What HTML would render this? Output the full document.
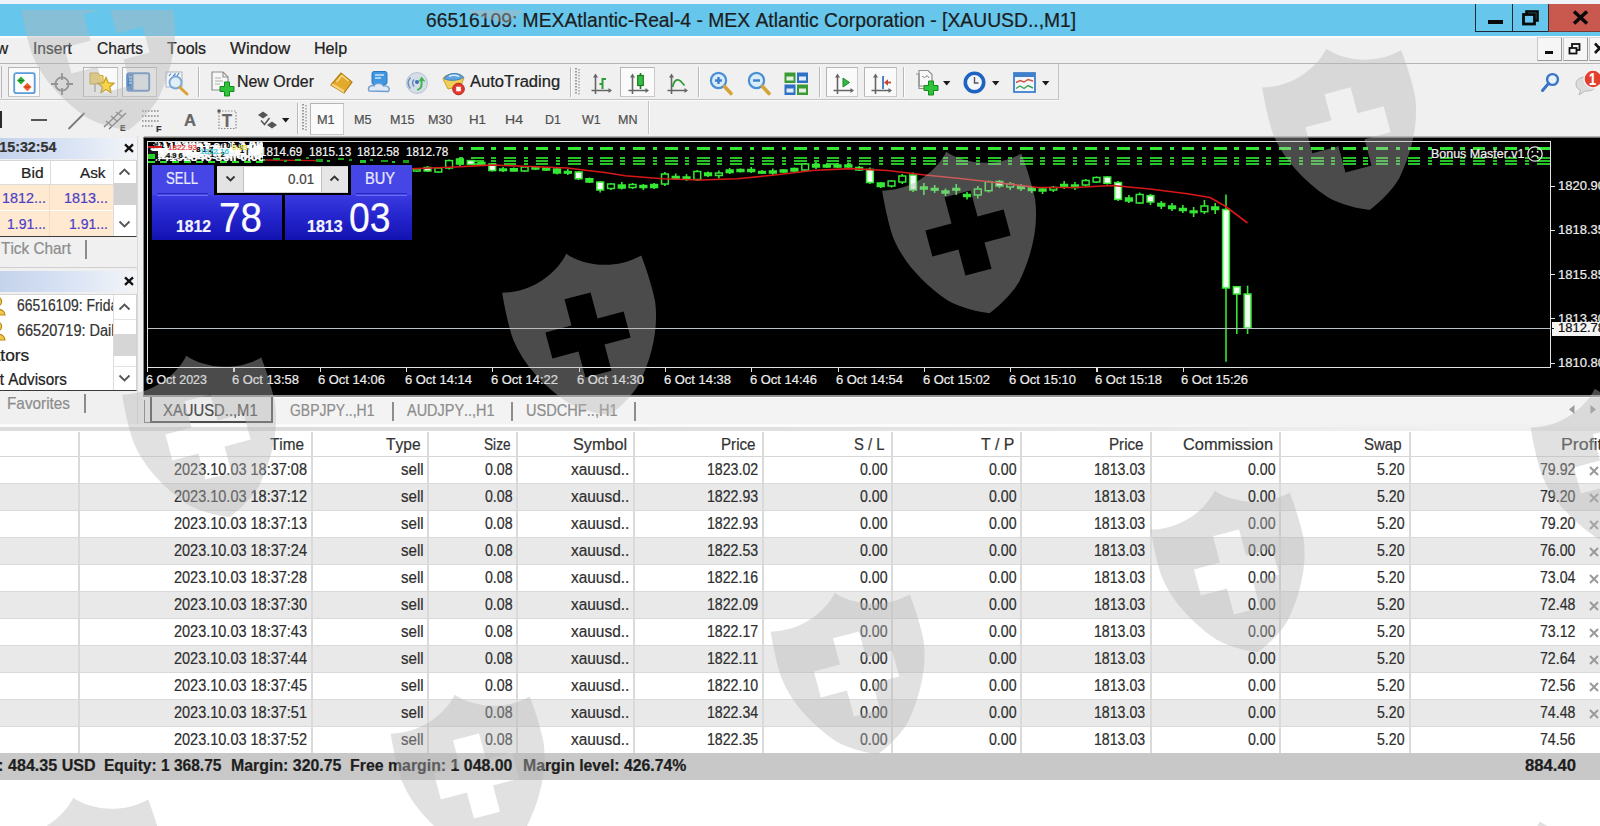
<!DOCTYPE html>
<html lang="en"><head><meta charset="utf-8"><title>66516109: MEXAtlantic-Real-4 - MEX Atlantic Corporation - [XAUUSD..,M1]</title><style>
html,body{margin:0;padding:0;}
body{width:1600px;height:826px;overflow:hidden;background:#fff;position:relative;
 font-family:"Liberation Sans",sans-serif;}
#root{position:absolute;left:0;top:0;width:1600px;height:826px;overflow:hidden;background:#fff;}
#inner{position:absolute;left:-8px;top:-8px;width:1616px;height:842px;background:#fff;}
#page{position:absolute;left:8px;top:8px;width:1600px;height:826px;}
#root div{position:absolute;box-sizing:border-box;}
#root svg{position:absolute;overflow:visible;}
.t{position:absolute;white-space:pre;font-kerning:none;font-variant-ligatures:none;transform-origin:0 50%;display:block;-webkit-text-stroke:0.22px currentColor;}
</style></head><body><div id="root"><div id="inner"><div id="page">
<div style="left:-12px;top:-12px;width:1624px;height:17px;background:#eef3f9;"></div>
<div style="left:-12px;top:4.4px;width:1624px;height:31.6px;background:#66c6ec;"></div>
<span class="t" style="left:426.00px;top:8.00px;font-size:19.5px;line-height:25px;color:#1c1c1c;transform:scale(0.9900,1.000);">66516109: MEXAtlantic-Real-4 - MEX Atlantic Corporation - [XAUUSD..,M1]</span>
<div style="left:1475px;top:4px;width:73px;height:28px;background:transparent;border-left:1px solid #1d2a33;border-bottom:1px solid #1d2a33;"></div>
<div style="left:1512px;top:4px;width:1px;height:28px;background:#1d2a33;"></div>
<div style="left:1548px;top:4px;width:64px;height:28px;background:#c9584f;border-left:1px solid #3a2a28;border-bottom:1px solid #7d3a35;"></div>
<div style="left:1488px;top:20px;width:14.5px;height:3.8px;background:#0a0a0a;"></div>
<svg style="left:1521px;top:8.5px;" width="20" height="18" viewBox="0 0 20 18"><rect x="5.5" y="2.5" width="11" height="9" fill="none" stroke="#0a0a0a" stroke-width="2.6"/><rect x="2.5" y="5.5" width="11" height="9.5" fill="#66c6ec" stroke="#0a0a0a" stroke-width="2.8"/></svg>
<svg style="left:1570.5px;top:9px;" width="20" height="18" viewBox="0 0 20 18"><path d="M3 2.5 L16 14.5 M16 2.5 L3 14.5" stroke="#0a0a0a" stroke-width="3.6" fill="none"/></svg>
<div style="left:-12px;top:36px;width:1624px;height:27px;background:#f0f0f0;"></div>
<div style="left:-12px;top:36px;width:1624px;height:1.5px;background:#f9fbfd;"></div>
<div style="left:-12px;top:62.5px;width:1624px;height:1.2px;background:#b4b4b4;"></div>
<span class="t" style="left:-27.00px;top:37.60px;font-size:16.6px;line-height:22px;color:#222;transform:scale(0.9763,1.000);">View</span>
<span class="t" style="left:33.00px;top:37.60px;font-size:16.6px;line-height:22px;color:#222;transform:scale(0.9379,1.000);">Insert</span>
<span class="t" style="left:97.00px;top:37.60px;font-size:16.6px;line-height:22px;color:#222;transform:scale(0.9409,1.000);">Charts</span>
<span class="t" style="left:167.00px;top:37.60px;font-size:16.6px;line-height:22px;color:#222;transform:scale(0.9635,1.000);">Tools</span>
<span class="t" style="left:230.00px;top:37.60px;font-size:16.6px;line-height:22px;color:#222;transform:scale(1.0182,1.000);">Window</span>
<span class="t" style="left:314.00px;top:37.60px;font-size:16.6px;line-height:22px;color:#222;transform:scale(0.9697,1.000);">Help</span>
<div style="left:1537px;top:37px;width:25px;height:24px;background:#f6f6f6;border:1px solid #9a9a9a;border-top-color:#d8d8d8;border-left-color:#c8c8c8;"></div>
<div style="left:1563px;top:37px;width:25px;height:24px;background:#f6f6f6;border:1px solid #9a9a9a;border-top-color:#d8d8d8;border-left-color:#c8c8c8;"></div>
<div style="left:1589px;top:37px;width:25px;height:24px;background:#f6f6f6;border:1px solid #9a9a9a;border-top-color:#d8d8d8;border-left-color:#c8c8c8;"></div>
<div style="left:1545px;top:51px;width:8px;height:2.5px;background:#111;"></div>
<svg style="left:1566px;top:40px;" width="20" height="18" viewBox="0 0 20 18"><rect x="6" y="4" width="7.5" height="6" fill="none" stroke="#111" stroke-width="1.8"/><rect x="3.5" y="8" width="7" height="5.5" fill="#f6f6f6" stroke="#111" stroke-width="1.8"/></svg>
<svg style="left:1592px;top:40px;" width="12" height="18" viewBox="0 0 12 18"><path d="M3 3.5 L12 13 M12 3.5 L3 13" stroke="#111" stroke-width="2.6" fill="none"/></svg>
<div style="left:-12px;top:63.8px;width:1624px;height:72.2px;background:#f0f0f0;"></div>
<div style="left:-12px;top:99px;width:1071px;height:1px;background:#c4c4c4;"></div>
<div style="left:-12px;top:100px;width:1071px;height:1px;background:#fafafa;"></div>
<div style="left:1058px;top:64px;width:1px;height:36px;background:#c4c4c4;"></div>
<div style="left:648px;top:101px;width:1px;height:33px;background:#c4c4c4;"></div>
<div style="left:649px;top:101px;width:1px;height:33px;background:#fbfbfb;"></div>
<div style="left:1px;top:66px;width:1px;height:32px;background:#b8b8b8;"></div>
<div style="left:8px;top:67px;width:32px;height:29.5px;background:#fafafa;border:1px solid #c9c9c9;border-top-color:#b5b5b5;border-left-color:#b5b5b5;"></div>
<svg style="left:13px;top:71.5px;" width="24" height="24" viewBox="0 0 24 24"><rect x="1.2" y="1.2" width="20.5" height="20" rx="2" fill="#fdfdfd" stroke="#5b9bd8" stroke-width="1.8"/><path d="M4 8.5 L8 4.5 L12 8.5 L8 12.5 Z" fill="#2fae3a"/><path d="M5.5 8.5 L10.5 8.5" stroke="#0d7a1c" stroke-width="1.2"/><path d="M10 15 L14.3 10.7 L18.6 15 L14.3 19.3 Z" fill="#f0642e"/><path d="M11.8 15 L16.8 15" stroke="#b83a10" stroke-width="1.2"/></svg>
<svg style="left:50px;top:72px;" width="24" height="24" viewBox="0 0 24 24"><circle cx="12" cy="12" r="6.6" fill="none" stroke="#7d7d7d" stroke-width="1.8"/><path d="M12 1 V8 M12 16 V23 M1 12 H8 M16 12 H23" stroke="#7d7d7d" stroke-width="1.8"/></svg>
<div style="left:83px;top:67px;width:35px;height:29.5px;background:#fafafa;border:1px solid #c9c9c9;border-top-color:#b5b5b5;border-left-color:#b5b5b5;"></div>
<svg style="left:88px;top:69px;" width="28" height="28" viewBox="0 0 28 28"><path d="M2 4 H10 L12 6.5 H15 V15 H2 Z" fill="#f3d36a" stroke="#c9a437" stroke-width="1"/><path d="M7 15 V23" stroke="#9a9a9a" stroke-width="1.3"/><path d="M18 8.5 L20.3 13.8 L26 14.3 L21.7 18 L23 23.6 L18 20.6 L13 23.6 L14.3 18 L10 14.3 L15.7 13.8 Z" fill="#f7d54a" stroke="#c49a1c" stroke-width="1.2"/></svg>
<div style="left:122px;top:67px;width:35px;height:29.5px;background:#fafafa;border:1px solid #c9c9c9;border-top-color:#b5b5b5;border-left-color:#b5b5b5;"></div>
<svg style="left:126px;top:72px;" width="26" height="22" viewBox="0 0 26 22"><rect x="1.2" y="1.2" width="22" height="17.5" rx="1.5" fill="#e8ecf2" stroke="#5f8fc8" stroke-width="1.9"/><rect x="2" y="2" width="5.5" height="16" fill="#4f86c6"/><path d="M3 5 H6 M3 8 H6 M3 11 H6" stroke="#dfe9f5" stroke-width="1"/></svg>
<svg style="left:164px;top:70px;" width="28" height="28" viewBox="0 0 28 28"><rect x="2" y="2" width="16" height="15" fill="#f4f6f9" stroke="#aab4c2" stroke-width="1"/><path d="M5 6 L7 3.5 M9 6.5 L11.5 3.5 M13 6 L15 3" stroke="#4f86c6" stroke-width="1.2"/><circle cx="11.5" cy="12.5" r="6" fill="#dcecf8" fill-opacity="0.85" stroke="#7aa7d6" stroke-width="1.8"/><path d="M16 17.5 L23 24" stroke="#d9a233" stroke-width="3" stroke-linecap="round"/></svg>
<div style="left:198px;top:67px;width:1px;height:30px;background:#b8b8b8;"></div>
<div style="left:199px;top:67px;width:1px;height:30px;background:#fdfdfd;"></div>
<svg style="left:210px;top:70px;" width="28" height="28" viewBox="0 0 28 28"><path d="M2 2 H13 L18 7 V20 H2 Z" fill="#f7f7f7" stroke="#8f8f8f" stroke-width="1.2"/><path d="M13 2 V7 H18" fill="none" stroke="#8f8f8f" stroke-width="1.1"/><path d="M5 8 H11 M5 11 H13 M5 14 H10" stroke="#b0b0b0" stroke-width="1"/><path d="M14.5 12 H19.5 V16.5 H24 V21.5 H19.5 V26 H14.5 V21.5 H10 V16.5 H14.5 Z" fill="#2fc23a" stroke="#15891f" stroke-width="1"/></svg>
<span class="t" style="left:237.00px;top:70.90px;font-size:16px;line-height:21px;color:#222;transform:scale(0.9953,1.000);">New Order</span>
<svg style="left:328px;top:70px;" width="28" height="26" viewBox="0 0 28 26"><path d="M3 15 L13 3 L24 12 L16 23 Z" fill="#e3a92a" stroke="#b57d12" stroke-width="1.2"/><path d="M3 15 L16 23 L16 20 L5 13.5 Z" fill="#f4d27a"/><path d="M8.5 12 L14 5.5 L20.5 11" fill="none" stroke="#f6dc93" stroke-width="1.4"/></svg>
<svg style="left:366px;top:70px;" width="26" height="26" viewBox="0 0 26 26"><rect x="6" y="1.5" width="15" height="13" rx="2" fill="#3f97e2" stroke="#2a78c2" stroke-width="1"/><path d="M9 5 H18 M9 8 H15" stroke="#cfe6fa" stroke-width="1.3"/><path d="M3 21 C1 17 5 14.5 8 16 C9 12.5 16 12.5 17.5 16 C22 15 24.5 18.5 22.5 21.5 Z" fill="#dfe9f3" stroke="#6f9fd0" stroke-width="1.3"/></svg>
<svg style="left:403px;top:70px;" width="28" height="26" viewBox="0 0 28 26"><circle cx="14" cy="13" r="10.5" fill="#d4dde8" stroke="#b7c3d2" stroke-width="1"/><path d="M7.5 7.5 C4.5 11 4.5 15 7.5 18.5 M11 9.5 C9 12 9 14 11 16.5" fill="none" stroke="#6d8fbf" stroke-width="1.5"/><circle cx="14" cy="12" r="2" fill="#3c6fb6"/><path d="M14 20.5 C18.5 20.5 20 17 19.5 11 L22.5 11.5 L18.5 6.5 L15.5 11.5 L17.5 11.3 C18 15.5 17 18.5 14 19 Z" fill="#3eb54a"/></svg>
<svg style="left:440px;top:69px;" width="28" height="28" viewBox="0 0 28 28"><path d="M3 10 C3 5 20 2.5 24 8.5 L21 17 L8 20 Z" fill="#f1cf54" stroke="#c7a12e" stroke-width="1"/><path d="M4 9.5 C8 3 20 3 23.5 8.5 C19 11.5 9 12.5 4 9.5 Z" fill="#5ea4de" stroke="#3a7fc0" stroke-width="1"/><path d="M9 7.5 C12 6 16 6 19 7.5" stroke="#d7ebfa" stroke-width="1.4" fill="none"/><circle cx="18.5" cy="20" r="5.8" fill="#e23a2c" stroke="#b3221a" stroke-width="1"/><rect x="16.2" y="17.7" width="4.6" height="4.6" fill="#fff"/></svg>
<span class="t" style="left:470.00px;top:70.90px;font-size:16px;line-height:21px;color:#222;transform:scale(1.0341,1.000);">AutoTrading</span>
<div style="left:570px;top:67px;width:1px;height:30px;background:#b8b8b8;"></div>
<div style="left:571px;top:67px;width:1px;height:30px;background:#fdfdfd;"></div>
<svg style="left:575px;top:68px;" width="6" height="29" viewBox="0 0 6 29"><rect x="0" y="0" width="2" height="1.5" fill="#9a9a9a"/><rect x="3" y="1" width="2" height="1.5" fill="#b5b5b5"/><rect x="0" y="3" width="2" height="1.5" fill="#9a9a9a"/><rect x="3" y="4" width="2" height="1.5" fill="#b5b5b5"/><rect x="0" y="6" width="2" height="1.5" fill="#9a9a9a"/><rect x="3" y="7" width="2" height="1.5" fill="#b5b5b5"/><rect x="0" y="9" width="2" height="1.5" fill="#9a9a9a"/><rect x="3" y="10" width="2" height="1.5" fill="#b5b5b5"/><rect x="0" y="12" width="2" height="1.5" fill="#9a9a9a"/><rect x="3" y="13" width="2" height="1.5" fill="#b5b5b5"/><rect x="0" y="15" width="2" height="1.5" fill="#9a9a9a"/><rect x="3" y="16" width="2" height="1.5" fill="#b5b5b5"/><rect x="0" y="18" width="2" height="1.5" fill="#9a9a9a"/><rect x="3" y="19" width="2" height="1.5" fill="#b5b5b5"/><rect x="0" y="21" width="2" height="1.5" fill="#9a9a9a"/><rect x="3" y="22" width="2" height="1.5" fill="#b5b5b5"/><rect x="0" y="24" width="2" height="1.5" fill="#9a9a9a"/><rect x="3" y="25" width="2" height="1.5" fill="#b5b5b5"/></svg>
<svg style="left:588px;top:70px;" width="26" height="26" viewBox="0 0 26 26"><path d="M7.5 6 V24 M3.5 20.5 H22" stroke="#666" stroke-width="1.6" fill="none"/><path d="M7.5 3.5 L5 7.5 H10 Z M24 20.5 L20.5 18 V23 Z" fill="#666"/><path d="M14.5 19 V9 H18 M14.5 14 H11.5" stroke="#2f9a3a" stroke-width="2" fill="none"/></svg>
<div style="left:620px;top:67px;width:35px;height:29.5px;background:#fafafa;border:1px solid #c9c9c9;border-top-color:#b5b5b5;border-left-color:#b5b5b5;"></div>
<svg style="left:625px;top:70px;" width="26" height="26" viewBox="0 0 26 26"><path d="M7.5 6 V24 M3.5 20.5 H22" stroke="#666" stroke-width="1.6" fill="none"/><path d="M7.5 3.5 L5 7.5 H10 Z M24 20.5 L20.5 18 V23 Z" fill="#666"/><path d="M15.5 3 V19" stroke="#1d7a27" stroke-width="1.6"/><rect x="12.7" y="5.5" width="5.6" height="10" fill="#35c043" stroke="#1d7a27" stroke-width="1.2"/></svg>
<svg style="left:664px;top:70px;" width="26" height="26" viewBox="0 0 26 26"><path d="M7.5 6 V24 M3.5 20.5 H22" stroke="#666" stroke-width="1.6" fill="none"/><path d="M7.5 3.5 L5 7.5 H10 Z M24 20.5 L20.5 18 V23 Z" fill="#666"/><path d="M8.5 17 C10.5 9 14 8.5 17 11.5 L20.5 15.5" stroke="#2f9a3a" stroke-width="1.8" fill="none"/></svg>
<div style="left:698px;top:67px;width:1px;height:30px;background:#b8b8b8;"></div>
<div style="left:699px;top:67px;width:1px;height:30px;background:#fdfdfd;"></div>
<svg style="left:708px;top:70px;" width="28" height="28" viewBox="0 0 28 28"><circle cx="10.5" cy="10.5" r="7.6" fill="#d9ecfa" stroke="#4a8fd4" stroke-width="2.2"/><path d="M7 10.5 H14" stroke="#3a7fc8" stroke-width="2.4"/><path d="M10.5 7 V14" stroke="#3a7fc8" stroke-width="2.4"/><path d="M16.5 16.5 L23 23.5" stroke="#d4a436" stroke-width="3.6" stroke-linecap="round"/></svg>
<svg style="left:746px;top:70px;" width="28" height="28" viewBox="0 0 28 28"><circle cx="10.5" cy="10.5" r="7.6" fill="#d9ecfa" stroke="#4a8fd4" stroke-width="2.2"/><path d="M7 10.5 H14" stroke="#3a7fc8" stroke-width="2.4"/><path d="M16.5 16.5 L23 23.5" stroke="#d4a436" stroke-width="3.6" stroke-linecap="round"/></svg>
<svg style="left:784px;top:71.5px;" width="26" height="24" viewBox="0 0 26 24"><rect x="0.5" y="0.5" width="11" height="10.5" fill="#3a9a36"/><rect x="13" y="0.5" width="11" height="10.5" fill="#2f6fc4"/><rect x="0.5" y="12.5" width="11" height="10.5" fill="#2f6fc4"/><rect x="13" y="12.5" width="11" height="10.5" fill="#3a9a36"/><rect x="2.5" y="4.5" width="7" height="4" fill="#e6f0e0"/><rect x="15" y="4.5" width="7" height="4" fill="#e2ecf8"/><rect x="2.5" y="16.5" width="7" height="4" fill="#e2ecf8"/><rect x="15" y="16.5" width="7" height="4" fill="#e6f0e0"/></svg>
<div style="left:819px;top:67px;width:1px;height:30px;background:#b8b8b8;"></div>
<div style="left:820px;top:67px;width:1px;height:30px;background:#fdfdfd;"></div>
<div style="left:826px;top:67px;width:32px;height:29.5px;background:#fafafa;border:1px solid #c9c9c9;border-top-color:#b5b5b5;border-left-color:#b5b5b5;"></div>
<svg style="left:830px;top:70px;" width="26" height="26" viewBox="0 0 26 26"><path d="M7.5 6 V24 M3.5 20.5 H22" stroke="#666" stroke-width="1.6" fill="none"/><path d="M7.5 3.5 L5 7.5 H10 Z M24 20.5 L20.5 18 V23 Z" fill="#666"/><path d="M13 8 L19.5 12.5 L13 17 Z" fill="#35b843" stroke="#1d8a2a" stroke-width="1"/></svg>
<div style="left:864px;top:67px;width:33px;height:29.5px;background:#fafafa;border:1px solid #c9c9c9;border-top-color:#b5b5b5;border-left-color:#b5b5b5;"></div>
<svg style="left:868px;top:70px;" width="26" height="26" viewBox="0 0 26 26"><path d="M7.5 6 V24 M3.5 20.5 H22" stroke="#666" stroke-width="1.6" fill="none"/><path d="M7.5 3.5 L5 7.5 H10 Z M24 20.5 L20.5 18 V23 Z" fill="#666"/><path d="M15 6 V19" stroke="#3a78c4" stroke-width="1.8"/><path d="M23 12.5 H18" stroke="#c8442c" stroke-width="1.8"/><path d="M16 12.5 L20 9.3 V15.7 Z" fill="#c8442c"/></svg>
<div style="left:903px;top:67px;width:1px;height:30px;background:#b8b8b8;"></div>
<div style="left:904px;top:67px;width:1px;height:30px;background:#fdfdfd;"></div>
<svg style="left:914px;top:69px;" width="28" height="28" viewBox="0 0 28 28"><path d="M5 1.5 H14 L18 5.5 V17 H5 Z" fill="#f7f7f7" stroke="#8f8f8f" stroke-width="1.2"/><path d="M2 5 H5 V19.5 H13" fill="none" stroke="#8f8f8f" stroke-width="1.2"/><path d="M8 8 C9 6 10 10 11.5 8 S14 7 15 9" stroke="#777" stroke-width="1" fill="none"/><path d="M14.5 12 H19.5 V16.5 H24 V21.5 H19.5 V26 H14.5 V21.5 H10 V16.5 H14.5 Z" fill="#2fc23a" stroke="#15891f" stroke-width="1"/></svg>
<svg style="left:943px;top:81px;" width="8" height="5" viewBox="0 0 8 5"><path d="M0 0 H7.4 L3.7 4.4 Z" fill="#1a1a1a"/></svg>
<svg style="left:963px;top:71px;" width="24" height="24" viewBox="0 0 24 24"><circle cx="11.5" cy="11.5" r="9.2" fill="#f3f6fa" stroke="#1f63c0" stroke-width="3.6"/><path d="M11.5 6 V12 H15.5" stroke="#555" stroke-width="1.4" fill="none"/></svg>
<svg style="left:992px;top:81px;" width="8" height="5" viewBox="0 0 8 5"><path d="M0 0 H7.4 L3.7 4.4 Z" fill="#1a1a1a"/></svg>
<svg style="left:1013px;top:72px;" width="24" height="22" viewBox="0 0 24 22"><rect x="1" y="1" width="21" height="19" fill="#f2f6fb" stroke="#3f7fcc" stroke-width="1.8"/><rect x="1" y="1" width="21" height="4" fill="#3f7fcc"/><path d="M3 10.5 L7 8.5 L11 10 L15 7.5 L20 9" stroke="#d0533a" stroke-width="1.4" fill="none"/><path d="M3 16.5 L7 14 L11 16.5 L15 13.5 L20 16" stroke="#3aa04a" stroke-width="1.4" fill="none"/></svg>
<svg style="left:1042px;top:81px;" width="8" height="5" viewBox="0 0 8 5"><path d="M0 0 H7.4 L3.7 4.4 Z" fill="#1a1a1a"/></svg>
<svg style="left:1540px;top:71px;" width="22" height="24" viewBox="0 0 22 24"><circle cx="12.5" cy="8.5" r="5.4" fill="#e8f1fb" stroke="#3a74c8" stroke-width="2.4"/><path d="M8.5 12.5 L2.5 19.5" stroke="#3a74c8" stroke-width="3" stroke-linecap="round"/></svg>
<svg style="left:1572.7px;top:67.5px;" width="30" height="32" viewBox="0 0 30 32"><path d="M3 16 C3 11 8 9 13 9 C19 9 23 12 23 16.5 C23 21 18 23.5 12 23 L6 27 L7.5 22 C4.5 21 3 19 3 16 Z" fill="#dcdcdc" stroke="#b9b9b9" stroke-width="1"/><circle cx="20" cy="11" r="9" fill="#e2402f" stroke="#f6f0ee" stroke-width="1.4"/></svg>
<span class="t" style="left:1589.00px;top:68.50px;font-size:16px;line-height:21px;color:#fff;font-weight:bold;transform:scale(0.7883,1.000);">1</span>
<div style="left:-12px;top:111px;width:14px;height:17px;background:#2a2a2a;"></div>
<div style="left:31px;top:119px;width:16px;height:2px;background:#555;"></div>
<svg style="left:66px;top:110px;" width="22" height="22" viewBox="0 0 22 22"><path d="M2.5 19 L18.5 3" stroke="#7a7a7a" stroke-width="1.8"/></svg>
<svg style="left:102px;top:106px;" width="30" height="28" viewBox="0 0 30 28"><path d="M2 21 L20 4 M7 23 L24 7 M4 15 L10 20 M9 10 L16 16 M14 6 L21 11" stroke="#7a7a7a" stroke-width="1.3" fill="none"/></svg>
<span class="t" style="left:120.00px;top:122.00px;font-size:9.5px;line-height:12px;color:#444;font-weight:bold;transform:scale(0.8706,1.000);">E</span>
<svg style="left:141px;top:108px;" width="22" height="24" viewBox="0 0 22 24"><path d="M1 3 H19 M1 8 H19 M1 13 H19 M1 18 H13" stroke="#8a8a8a" stroke-width="1.4" stroke-dasharray="1.6 1.4"/></svg>
<span class="t" style="left:156.00px;top:122.50px;font-size:9.5px;line-height:12px;color:#333;font-weight:bold;transform:scale(0.9491,1.000);">F</span>
<span class="t" style="left:183.50px;top:109.50px;font-size:17px;line-height:22px;color:#666;font-weight:bold;transform:scale(0.9804,1.000);">A</span>
<svg style="left:216px;top:108px;" width="24" height="24" viewBox="0 0 24 24"><rect x="3" y="3" width="17" height="17.5" fill="none" stroke="#8a8a8a" stroke-width="1.2" stroke-dasharray="1.5 1.5"/><rect x="1.5" y="1.5" width="3" height="3" fill="#555"/></svg>
<span class="t" style="left:222.00px;top:109.50px;font-size:17.5px;line-height:23px;color:#666;font-weight:bold;transform:scale(0.9368,1.000);">T</span>
<svg style="left:256px;top:108px;" width="24" height="24" viewBox="0 0 24 24"><path d="M2 7 L7 3.5 L12 7 L7 10.5 Z" fill="#555"/><path d="M11 17 L16 13.5 L21 17 L16 20.5 Z" fill="#555"/><path d="M5 12.5 L8.5 16.5 L13.5 10" stroke="#555" stroke-width="1.5" fill="none"/></svg>
<svg style="left:282px;top:118px;" width="8" height="5" viewBox="0 0 8 5"><path d="M0 0 H7.4 L3.7 4.4 Z" fill="#1a1a1a"/></svg>
<div style="left:297px;top:103px;width:1px;height:31px;background:#b8b8b8;"></div>
<div style="left:298px;top:103px;width:1px;height:31px;background:#fdfdfd;"></div>
<svg style="left:302px;top:104px;" width="6" height="29" viewBox="0 0 6 29"><rect x="0" y="0" width="2" height="1.5" fill="#9a9a9a"/><rect x="3" y="1" width="2" height="1.5" fill="#b5b5b5"/><rect x="0" y="3" width="2" height="1.5" fill="#9a9a9a"/><rect x="3" y="4" width="2" height="1.5" fill="#b5b5b5"/><rect x="0" y="6" width="2" height="1.5" fill="#9a9a9a"/><rect x="3" y="7" width="2" height="1.5" fill="#b5b5b5"/><rect x="0" y="9" width="2" height="1.5" fill="#9a9a9a"/><rect x="3" y="10" width="2" height="1.5" fill="#b5b5b5"/><rect x="0" y="12" width="2" height="1.5" fill="#9a9a9a"/><rect x="3" y="13" width="2" height="1.5" fill="#b5b5b5"/><rect x="0" y="15" width="2" height="1.5" fill="#9a9a9a"/><rect x="3" y="16" width="2" height="1.5" fill="#b5b5b5"/><rect x="0" y="18" width="2" height="1.5" fill="#9a9a9a"/><rect x="3" y="19" width="2" height="1.5" fill="#b5b5b5"/><rect x="0" y="21" width="2" height="1.5" fill="#9a9a9a"/><rect x="3" y="22" width="2" height="1.5" fill="#b5b5b5"/><rect x="0" y="24" width="2" height="1.5" fill="#9a9a9a"/><rect x="3" y="25" width="2" height="1.5" fill="#b5b5b5"/></svg>
<div style="left:310px;top:103px;width:34px;height:32px;background:#fafafa;border:1px solid #c9c9c9;border-top-color:#b5b5b5;border-left-color:#b5b5b5;"></div>
<span class="t" style="left:317.00px;top:112.20px;font-size:12.6px;line-height:16px;color:#505050;transform:scale(1.0106,1.000);">M1</span>
<span class="t" style="left:354.40px;top:112.20px;font-size:12.6px;line-height:16px;color:#505050;transform:scale(1.0049,1.000);">M5</span>
<span class="t" style="left:389.60px;top:112.20px;font-size:12.6px;line-height:16px;color:#505050;transform:scale(0.9956,1.000);">M15</span>
<span class="t" style="left:427.50px;top:112.20px;font-size:12.6px;line-height:16px;color:#505050;transform:scale(0.9997,1.000);">M30</span>
<span class="t" style="left:468.70px;top:112.20px;font-size:12.6px;line-height:16px;color:#505050;transform:scale(1.0520,1.000);">H1</span>
<span class="t" style="left:505.00px;top:112.20px;font-size:12.6px;line-height:16px;color:#505050;transform:scale(1.1204,1.000);">H4</span>
<span class="t" style="left:544.70px;top:112.20px;font-size:12.6px;line-height:16px;color:#505050;transform:scale(0.9897,1.000);">D1</span>
<span class="t" style="left:582.00px;top:112.20px;font-size:12.6px;line-height:16px;color:#505050;transform:scale(0.9841,1.000);">W1</span>
<span class="t" style="left:617.50px;top:112.20px;font-size:12.6px;line-height:16px;color:#505050;transform:scale(0.9953,1.000);">MN</span>
<div style="left:-12px;top:136px;width:156px;height:290px;background:#f0f0f0;"></div>
<div style="left:0px;top:138px;width:137px;height:21px;background:linear-gradient(90deg,#c4d3ec 0%,#d6e1f3 45%,#e9eef7 80%,#f3f4f6 100%);"></div>
<span class="t" style="left:-101.95px;top:138.80px;font-size:13.8px;line-height:18px;color:#333;font-weight:bold;transform:scale(1.0326,1.000);">Market Watch: 15:32:54</span>
<svg style="left:123px;top:142px;" width="12" height="12" viewBox="0 0 12 12"><path d="M2 2.4 L10 9.8 M10 2.4 L2 9.8" stroke="#111" stroke-width="2.3" fill="none"/></svg>
<div style="left:-12px;top:160px;width:149px;height:77px;background:#fff;border-bottom:1px solid #3c3c3c;border-right:1px solid #d0d0d0;border-top:1px solid #d6d6d6;"></div>
<div style="left:-12px;top:184px;width:126px;height:1px;background:#dcdcdc;"></div>
<div style="left:50px;top:161px;width:1px;height:23px;background:#dcdcdc;"></div>
<div style="left:113px;top:161px;width:1px;height:75px;background:#dcdcdc;"></div>
<div style="left:-12px;top:185px;width:125px;height:25px;background:#ffe9d1;"></div>
<div style="left:-12px;top:211px;width:125px;height:25px;background:#ffe9d1;"></div>
<div style="left:49px;top:185px;width:1px;height:51px;background:#f5dcc0;"></div>
<span class="t" style="left:21.00px;top:162.50px;font-size:15.4px;line-height:20px;color:#222;transform:scale(1.0146,1.000);">Bid</span>
<span class="t" style="left:80.00px;top:162.50px;font-size:15.4px;line-height:20px;color:#222;transform:scale(0.9945,1.000);">Ask</span>
<span class="t" style="left:2.00px;top:188.00px;font-size:15.4px;line-height:20px;color:#4b40c6;transform:scale(0.9337,1.000);">1812...</span>
<span class="t" style="left:64.00px;top:188.00px;font-size:15.4px;line-height:20px;color:#4b40c6;transform:scale(0.9337,1.000);">1813...</span>
<span class="t" style="left:7.00px;top:214.00px;font-size:15.4px;line-height:20px;color:#4b40c6;transform:scale(0.9093,1.000);">1.91...</span>
<span class="t" style="left:69.00px;top:214.00px;font-size:15.4px;line-height:20px;color:#4b40c6;transform:scale(0.9093,1.000);">1.91...</span>
<svg style="left:118.0px;top:167px;" width="13" height="10" viewBox="0 0 13 10"><path d="M1.5 7.5 L6.5 2.5 L11.5 7.5" stroke="#555" stroke-width="1.8" fill="none"/></svg>
<div style="left:114px;top:183px;width:22px;height:22px;background:#d2d2d2;"></div>
<svg style="left:118.0px;top:219px;" width="13" height="10" viewBox="0 0 13 10"><path d="M1.5 2.5 L6.5 7.5 L11.5 2.5" stroke="#555" stroke-width="1.8" fill="none"/></svg>
<span class="t" style="left:1.00px;top:237.50px;font-size:16.4px;line-height:21px;color:#8c8c8c;transform:scale(0.9372,1.000);">Tick Chart</span>
<div style="left:85px;top:240px;width:1.5px;height:19px;background:#8c8c8c;"></div>
<div style="left:-12px;top:267px;width:149px;height:1px;background:#cfcfcf;"></div>
<div style="left:0px;top:271px;width:137px;height:21px;background:linear-gradient(90deg,#c4d3ec 0%,#d6e1f3 45%,#e9eef7 80%,#f3f4f6 100%);"></div>
<span class="t" style="left:-70.00px;top:271.50px;font-size:14.6px;line-height:19px;color:#333;font-weight:bold;transform:scale(0.9509,1.000);">Navigator</span>
<svg style="left:123px;top:275px;" width="12" height="12" viewBox="0 0 12 12"><path d="M2 2.4 L10 9.8 M10 2.4 L2 9.8" stroke="#111" stroke-width="2.3" fill="none"/></svg>
<div style="left:-12px;top:294px;width:149px;height:97px;background:#fff;border-bottom:1px solid #3c3c3c;border-right:1px solid #d0d0d0;border-top:1px solid #d6d6d6;"></div>
<div style="left:0;top:295px;width:113px;height:95px;overflow:hidden;">
<span class="t" style="left:17.00px;top:0.00px;font-size:15.8px;line-height:21px;color:#333;transform:scale(0.8792,1.000);">66516109: Friday</span>
<span class="t" style="left:17.00px;top:24.50px;font-size:15.8px;line-height:21px;color:#333;transform:scale(0.9167,1.000);">66520719: Daily</span>
<span class="t" style="left:-46.28px;top:50.00px;font-size:15.8px;line-height:21px;color:#222;transform:scale(1.0991,1.000);">Indicators</span>
<span class="t" style="left:-39.84px;top:74.00px;font-size:15.8px;line-height:21px;color:#222;transform:scale(0.9661,1.000);">Expert Advisors</span>
<svg style="left:-12px;top:1px;" width="18" height="20" viewBox="0 0 18 20"><circle cx="9" cy="5.5" r="4.6" fill="#f2c84a" stroke="#b98a1a" stroke-width="1.2"/><path d="M1 19 C1 11 17 11 17 19 Z" fill="#f2c84a" stroke="#b98a1a" stroke-width="1.2"/></svg>
<svg style="left:-12px;top:26px;" width="18" height="20" viewBox="0 0 18 20"><circle cx="9" cy="5.5" r="4.6" fill="#f2c84a" stroke="#b98a1a" stroke-width="1.2"/><path d="M1 19 C1 11 17 11 17 19 Z" fill="#f2c84a" stroke="#b98a1a" stroke-width="1.2"/></svg>
</div>
<div style="left:113px;top:295px;width:1px;height:95px;background:#dcdcdc;"></div>
<div style="left:114px;top:319px;width:22px;height:1px;background:#e2e2e2;"></div>
<div style="left:114px;top:366px;width:22px;height:1px;background:#e2e2e2;"></div>
<svg style="left:118.0px;top:302px;" width="13" height="10" viewBox="0 0 13 10"><path d="M1.5 7.5 L6.5 2.5 L11.5 7.5" stroke="#555" stroke-width="1.8" fill="none"/></svg>
<div style="left:114px;top:334px;width:22px;height:22px;background:#d6d6d6;"></div>
<svg style="left:118.0px;top:373px;" width="13" height="10" viewBox="0 0 13 10"><path d="M1.5 2.5 L6.5 7.5 L11.5 2.5" stroke="#555" stroke-width="1.8" fill="none"/></svg>
<span class="t" style="left:7.00px;top:392.50px;font-size:16.4px;line-height:21px;color:#8c8c8c;transform:scale(0.9347,1.000);">Favorites</span>
<div style="left:84px;top:394px;width:1.5px;height:19px;background:#8c8c8c;"></div>
<div style="left:137px;top:136px;width:1px;height:288px;background:#dadada;"></div>
<div style="left:143.6px;top:135.6px;width:1457px;height:2.2px;background:linear-gradient(180deg,#d8d8d8,#4a4a4a);"></div>
<div style="left:143.6px;top:137.6px;width:1457px;height:257.2px;background:#000;"></div>
<div style="left:142.8px;top:137px;width:1px;height:258px;background:#8a8a8a;"></div>
<div style="left:147px;top:141px;width:1404px;height:1px;background:#e2e2e2;"></div>
<div style="left:147px;top:141px;width:1px;height:227px;background:#e2e2e2;"></div>
<div style="left:1550px;top:141px;width:1px;height:227px;background:#e2e2e2;"></div>
<div style="left:147px;top:367px;width:1404px;height:1px;background:#e2e2e2;"></div>
<div style="left:148px;top:142px;width:1402px;height:225px;overflow:hidden;">
<div style="left:310.95px;top:5.40px;width:4.40px;height:3.00px;background:#35e835;"></div>
<div style="left:310.95px;top:15.00px;width:4.40px;height:2.10px;background:#27c227;"></div>
<div style="left:310.95px;top:18.20px;width:4.40px;height:2.10px;background:#27c227;"></div>
<div style="left:310.95px;top:21.40px;width:4.40px;height:2.10px;background:#27c227;"></div>
<div style="left:323.25px;top:5.40px;width:12.50px;height:3.00px;background:#35e835;"></div>
<div style="left:323.25px;top:15.00px;width:12.50px;height:2.10px;background:#27c227;"></div>
<div style="left:323.25px;top:18.20px;width:12.50px;height:2.10px;background:#27c227;"></div>
<div style="left:323.25px;top:21.40px;width:12.50px;height:2.10px;background:#27c227;"></div>
<div style="left:343.25px;top:5.40px;width:4.40px;height:3.00px;background:#35e835;"></div>
<div style="left:343.25px;top:15.00px;width:4.40px;height:2.10px;background:#27c227;"></div>
<div style="left:343.25px;top:18.20px;width:4.40px;height:2.10px;background:#27c227;"></div>
<div style="left:343.25px;top:21.40px;width:4.40px;height:2.10px;background:#27c227;"></div>
<div style="left:355.55px;top:5.40px;width:12.50px;height:3.00px;background:#35e835;"></div>
<div style="left:355.55px;top:15.00px;width:12.50px;height:2.10px;background:#27c227;"></div>
<div style="left:355.55px;top:18.20px;width:12.50px;height:2.10px;background:#27c227;"></div>
<div style="left:355.55px;top:21.40px;width:12.50px;height:2.10px;background:#27c227;"></div>
<div style="left:375.55px;top:5.40px;width:4.40px;height:3.00px;background:#35e835;"></div>
<div style="left:375.55px;top:15.00px;width:4.40px;height:2.10px;background:#27c227;"></div>
<div style="left:375.55px;top:18.20px;width:4.40px;height:2.10px;background:#27c227;"></div>
<div style="left:375.55px;top:21.40px;width:4.40px;height:2.10px;background:#27c227;"></div>
<div style="left:387.85px;top:5.40px;width:12.50px;height:3.00px;background:#35e835;"></div>
<div style="left:387.85px;top:15.00px;width:12.50px;height:2.10px;background:#27c227;"></div>
<div style="left:387.85px;top:18.20px;width:12.50px;height:2.10px;background:#27c227;"></div>
<div style="left:387.85px;top:21.40px;width:12.50px;height:2.10px;background:#27c227;"></div>
<div style="left:407.85px;top:5.40px;width:4.40px;height:3.00px;background:#35e835;"></div>
<div style="left:407.85px;top:15.00px;width:4.40px;height:2.10px;background:#27c227;"></div>
<div style="left:407.85px;top:18.20px;width:4.40px;height:2.10px;background:#27c227;"></div>
<div style="left:407.85px;top:21.40px;width:4.40px;height:2.10px;background:#27c227;"></div>
<div style="left:420.15px;top:5.40px;width:12.50px;height:3.00px;background:#35e835;"></div>
<div style="left:420.15px;top:15.00px;width:12.50px;height:2.10px;background:#27c227;"></div>
<div style="left:420.15px;top:18.20px;width:12.50px;height:2.10px;background:#27c227;"></div>
<div style="left:420.15px;top:21.40px;width:12.50px;height:2.10px;background:#27c227;"></div>
<div style="left:440.15px;top:5.40px;width:4.40px;height:3.00px;background:#35e835;"></div>
<div style="left:440.15px;top:15.00px;width:4.40px;height:2.10px;background:#27c227;"></div>
<div style="left:440.15px;top:18.20px;width:4.40px;height:2.10px;background:#27c227;"></div>
<div style="left:440.15px;top:21.40px;width:4.40px;height:2.10px;background:#27c227;"></div>
<div style="left:452.45px;top:5.40px;width:12.50px;height:3.00px;background:#35e835;"></div>
<div style="left:452.45px;top:15.00px;width:12.50px;height:2.10px;background:#27c227;"></div>
<div style="left:452.45px;top:18.20px;width:12.50px;height:2.10px;background:#27c227;"></div>
<div style="left:452.45px;top:21.40px;width:12.50px;height:2.10px;background:#27c227;"></div>
<div style="left:472.45px;top:5.40px;width:4.40px;height:3.00px;background:#35e835;"></div>
<div style="left:472.45px;top:15.00px;width:4.40px;height:2.10px;background:#27c227;"></div>
<div style="left:472.45px;top:18.20px;width:4.40px;height:2.10px;background:#27c227;"></div>
<div style="left:472.45px;top:21.40px;width:4.40px;height:2.10px;background:#27c227;"></div>
<div style="left:484.75px;top:5.40px;width:12.50px;height:3.00px;background:#35e835;"></div>
<div style="left:484.75px;top:15.00px;width:12.50px;height:2.10px;background:#27c227;"></div>
<div style="left:484.75px;top:18.20px;width:12.50px;height:2.10px;background:#27c227;"></div>
<div style="left:484.75px;top:21.40px;width:12.50px;height:2.10px;background:#27c227;"></div>
<div style="left:504.75px;top:5.40px;width:4.40px;height:3.00px;background:#35e835;"></div>
<div style="left:504.75px;top:15.00px;width:4.40px;height:2.10px;background:#27c227;"></div>
<div style="left:504.75px;top:18.20px;width:4.40px;height:2.10px;background:#27c227;"></div>
<div style="left:504.75px;top:21.40px;width:4.40px;height:2.10px;background:#27c227;"></div>
<div style="left:517.05px;top:5.40px;width:12.50px;height:3.00px;background:#35e835;"></div>
<div style="left:517.05px;top:15.00px;width:12.50px;height:2.10px;background:#27c227;"></div>
<div style="left:517.05px;top:18.20px;width:12.50px;height:2.10px;background:#27c227;"></div>
<div style="left:517.05px;top:21.40px;width:12.50px;height:2.10px;background:#27c227;"></div>
<div style="left:537.05px;top:5.40px;width:4.40px;height:3.00px;background:#35e835;"></div>
<div style="left:537.05px;top:15.00px;width:4.40px;height:2.10px;background:#27c227;"></div>
<div style="left:537.05px;top:18.20px;width:4.40px;height:2.10px;background:#27c227;"></div>
<div style="left:537.05px;top:21.40px;width:4.40px;height:2.10px;background:#27c227;"></div>
<div style="left:549.35px;top:5.40px;width:12.50px;height:3.00px;background:#35e835;"></div>
<div style="left:549.35px;top:15.00px;width:12.50px;height:2.10px;background:#27c227;"></div>
<div style="left:549.35px;top:18.20px;width:12.50px;height:2.10px;background:#27c227;"></div>
<div style="left:549.35px;top:21.40px;width:12.50px;height:2.10px;background:#27c227;"></div>
<div style="left:569.35px;top:5.40px;width:4.40px;height:3.00px;background:#35e835;"></div>
<div style="left:569.35px;top:15.00px;width:4.40px;height:2.10px;background:#27c227;"></div>
<div style="left:569.35px;top:18.20px;width:4.40px;height:2.10px;background:#27c227;"></div>
<div style="left:569.35px;top:21.40px;width:4.40px;height:2.10px;background:#27c227;"></div>
<div style="left:581.65px;top:5.40px;width:12.50px;height:3.00px;background:#35e835;"></div>
<div style="left:581.65px;top:15.00px;width:12.50px;height:2.10px;background:#27c227;"></div>
<div style="left:581.65px;top:18.20px;width:12.50px;height:2.10px;background:#27c227;"></div>
<div style="left:581.65px;top:21.40px;width:12.50px;height:2.10px;background:#27c227;"></div>
<div style="left:601.65px;top:5.40px;width:4.40px;height:3.00px;background:#35e835;"></div>
<div style="left:601.65px;top:15.00px;width:4.40px;height:2.10px;background:#27c227;"></div>
<div style="left:601.65px;top:18.20px;width:4.40px;height:2.10px;background:#27c227;"></div>
<div style="left:601.65px;top:21.40px;width:4.40px;height:2.10px;background:#27c227;"></div>
<div style="left:613.95px;top:5.40px;width:12.50px;height:3.00px;background:#35e835;"></div>
<div style="left:613.95px;top:15.00px;width:12.50px;height:2.10px;background:#27c227;"></div>
<div style="left:613.95px;top:18.20px;width:12.50px;height:2.10px;background:#27c227;"></div>
<div style="left:613.95px;top:21.40px;width:12.50px;height:2.10px;background:#27c227;"></div>
<div style="left:633.95px;top:5.40px;width:4.40px;height:3.00px;background:#35e835;"></div>
<div style="left:633.95px;top:15.00px;width:4.40px;height:2.10px;background:#27c227;"></div>
<div style="left:633.95px;top:18.20px;width:4.40px;height:2.10px;background:#27c227;"></div>
<div style="left:633.95px;top:21.40px;width:4.40px;height:2.10px;background:#27c227;"></div>
<div style="left:646.25px;top:5.40px;width:12.50px;height:3.00px;background:#35e835;"></div>
<div style="left:646.25px;top:15.00px;width:12.50px;height:2.10px;background:#27c227;"></div>
<div style="left:646.25px;top:18.20px;width:12.50px;height:2.10px;background:#27c227;"></div>
<div style="left:646.25px;top:21.40px;width:12.50px;height:2.10px;background:#27c227;"></div>
<div style="left:666.25px;top:5.40px;width:4.40px;height:3.00px;background:#35e835;"></div>
<div style="left:666.25px;top:15.00px;width:4.40px;height:2.10px;background:#27c227;"></div>
<div style="left:666.25px;top:18.20px;width:4.40px;height:2.10px;background:#27c227;"></div>
<div style="left:666.25px;top:21.40px;width:4.40px;height:2.10px;background:#27c227;"></div>
<div style="left:678.55px;top:5.40px;width:12.50px;height:3.00px;background:#35e835;"></div>
<div style="left:678.55px;top:15.00px;width:12.50px;height:2.10px;background:#27c227;"></div>
<div style="left:678.55px;top:18.20px;width:12.50px;height:2.10px;background:#27c227;"></div>
<div style="left:678.55px;top:21.40px;width:12.50px;height:2.10px;background:#27c227;"></div>
<div style="left:698.55px;top:5.40px;width:4.40px;height:3.00px;background:#35e835;"></div>
<div style="left:698.55px;top:15.00px;width:4.40px;height:2.10px;background:#27c227;"></div>
<div style="left:698.55px;top:18.20px;width:4.40px;height:2.10px;background:#27c227;"></div>
<div style="left:698.55px;top:21.40px;width:4.40px;height:2.10px;background:#27c227;"></div>
<div style="left:710.85px;top:5.40px;width:12.50px;height:3.00px;background:#35e835;"></div>
<div style="left:710.85px;top:15.00px;width:12.50px;height:2.10px;background:#27c227;"></div>
<div style="left:710.85px;top:18.20px;width:12.50px;height:2.10px;background:#27c227;"></div>
<div style="left:710.85px;top:21.40px;width:12.50px;height:2.10px;background:#27c227;"></div>
<div style="left:730.85px;top:5.40px;width:4.40px;height:3.00px;background:#35e835;"></div>
<div style="left:730.85px;top:15.00px;width:4.40px;height:2.10px;background:#27c227;"></div>
<div style="left:730.85px;top:18.20px;width:4.40px;height:2.10px;background:#27c227;"></div>
<div style="left:730.85px;top:21.40px;width:4.40px;height:2.10px;background:#27c227;"></div>
<div style="left:743.15px;top:5.40px;width:12.50px;height:3.00px;background:#35e835;"></div>
<div style="left:743.15px;top:15.00px;width:12.50px;height:2.10px;background:#27c227;"></div>
<div style="left:743.15px;top:18.20px;width:12.50px;height:2.10px;background:#27c227;"></div>
<div style="left:743.15px;top:21.40px;width:12.50px;height:2.10px;background:#27c227;"></div>
<div style="left:763.15px;top:5.40px;width:4.40px;height:3.00px;background:#35e835;"></div>
<div style="left:763.15px;top:15.00px;width:4.40px;height:2.10px;background:#27c227;"></div>
<div style="left:763.15px;top:18.20px;width:4.40px;height:2.10px;background:#27c227;"></div>
<div style="left:763.15px;top:21.40px;width:4.40px;height:2.10px;background:#27c227;"></div>
<div style="left:775.45px;top:5.40px;width:12.50px;height:3.00px;background:#35e835;"></div>
<div style="left:775.45px;top:15.00px;width:12.50px;height:2.10px;background:#27c227;"></div>
<div style="left:775.45px;top:18.20px;width:12.50px;height:2.10px;background:#27c227;"></div>
<div style="left:775.45px;top:21.40px;width:12.50px;height:2.10px;background:#27c227;"></div>
<div style="left:795.45px;top:5.40px;width:4.40px;height:3.00px;background:#35e835;"></div>
<div style="left:795.45px;top:15.00px;width:4.40px;height:2.10px;background:#27c227;"></div>
<div style="left:795.45px;top:18.20px;width:4.40px;height:2.10px;background:#27c227;"></div>
<div style="left:795.45px;top:21.40px;width:4.40px;height:2.10px;background:#27c227;"></div>
<div style="left:807.75px;top:5.40px;width:12.50px;height:3.00px;background:#35e835;"></div>
<div style="left:807.75px;top:15.00px;width:12.50px;height:2.10px;background:#27c227;"></div>
<div style="left:807.75px;top:18.20px;width:12.50px;height:2.10px;background:#27c227;"></div>
<div style="left:807.75px;top:21.40px;width:12.50px;height:2.10px;background:#27c227;"></div>
<div style="left:827.75px;top:5.40px;width:4.40px;height:3.00px;background:#35e835;"></div>
<div style="left:827.75px;top:15.00px;width:4.40px;height:2.10px;background:#27c227;"></div>
<div style="left:827.75px;top:18.20px;width:4.40px;height:2.10px;background:#27c227;"></div>
<div style="left:827.75px;top:21.40px;width:4.40px;height:2.10px;background:#27c227;"></div>
<div style="left:840.05px;top:5.40px;width:12.50px;height:3.00px;background:#35e835;"></div>
<div style="left:840.05px;top:15.00px;width:12.50px;height:2.10px;background:#27c227;"></div>
<div style="left:840.05px;top:18.20px;width:12.50px;height:2.10px;background:#27c227;"></div>
<div style="left:840.05px;top:21.40px;width:12.50px;height:2.10px;background:#27c227;"></div>
<div style="left:860.05px;top:5.40px;width:4.40px;height:3.00px;background:#35e835;"></div>
<div style="left:860.05px;top:15.00px;width:4.40px;height:2.10px;background:#27c227;"></div>
<div style="left:860.05px;top:18.20px;width:4.40px;height:2.10px;background:#27c227;"></div>
<div style="left:860.05px;top:21.40px;width:4.40px;height:2.10px;background:#27c227;"></div>
<div style="left:872.35px;top:5.40px;width:12.50px;height:3.00px;background:#35e835;"></div>
<div style="left:872.35px;top:15.00px;width:12.50px;height:2.10px;background:#27c227;"></div>
<div style="left:872.35px;top:18.20px;width:12.50px;height:2.10px;background:#27c227;"></div>
<div style="left:872.35px;top:21.40px;width:12.50px;height:2.10px;background:#27c227;"></div>
<div style="left:892.35px;top:5.40px;width:4.40px;height:3.00px;background:#35e835;"></div>
<div style="left:892.35px;top:15.00px;width:4.40px;height:2.10px;background:#27c227;"></div>
<div style="left:892.35px;top:18.20px;width:4.40px;height:2.10px;background:#27c227;"></div>
<div style="left:892.35px;top:21.40px;width:4.40px;height:2.10px;background:#27c227;"></div>
<div style="left:904.65px;top:5.40px;width:12.50px;height:3.00px;background:#35e835;"></div>
<div style="left:904.65px;top:15.00px;width:12.50px;height:2.10px;background:#27c227;"></div>
<div style="left:904.65px;top:18.20px;width:12.50px;height:2.10px;background:#27c227;"></div>
<div style="left:904.65px;top:21.40px;width:12.50px;height:2.10px;background:#27c227;"></div>
<div style="left:924.65px;top:5.40px;width:4.40px;height:3.00px;background:#35e835;"></div>
<div style="left:924.65px;top:15.00px;width:4.40px;height:2.10px;background:#27c227;"></div>
<div style="left:924.65px;top:18.20px;width:4.40px;height:2.10px;background:#27c227;"></div>
<div style="left:924.65px;top:21.40px;width:4.40px;height:2.10px;background:#27c227;"></div>
<div style="left:936.95px;top:5.40px;width:12.50px;height:3.00px;background:#35e835;"></div>
<div style="left:936.95px;top:15.00px;width:12.50px;height:2.10px;background:#27c227;"></div>
<div style="left:936.95px;top:18.20px;width:12.50px;height:2.10px;background:#27c227;"></div>
<div style="left:936.95px;top:21.40px;width:12.50px;height:2.10px;background:#27c227;"></div>
<div style="left:956.95px;top:5.40px;width:4.40px;height:3.00px;background:#35e835;"></div>
<div style="left:956.95px;top:15.00px;width:4.40px;height:2.10px;background:#27c227;"></div>
<div style="left:956.95px;top:18.20px;width:4.40px;height:2.10px;background:#27c227;"></div>
<div style="left:956.95px;top:21.40px;width:4.40px;height:2.10px;background:#27c227;"></div>
<div style="left:969.25px;top:5.40px;width:12.50px;height:3.00px;background:#35e835;"></div>
<div style="left:969.25px;top:15.00px;width:12.50px;height:2.10px;background:#27c227;"></div>
<div style="left:969.25px;top:18.20px;width:12.50px;height:2.10px;background:#27c227;"></div>
<div style="left:969.25px;top:21.40px;width:12.50px;height:2.10px;background:#27c227;"></div>
<div style="left:989.25px;top:5.40px;width:4.40px;height:3.00px;background:#35e835;"></div>
<div style="left:989.25px;top:15.00px;width:4.40px;height:2.10px;background:#27c227;"></div>
<div style="left:989.25px;top:18.20px;width:4.40px;height:2.10px;background:#27c227;"></div>
<div style="left:989.25px;top:21.40px;width:4.40px;height:2.10px;background:#27c227;"></div>
<div style="left:1001.55px;top:5.40px;width:12.50px;height:3.00px;background:#35e835;"></div>
<div style="left:1001.55px;top:15.00px;width:12.50px;height:2.10px;background:#27c227;"></div>
<div style="left:1001.55px;top:18.20px;width:12.50px;height:2.10px;background:#27c227;"></div>
<div style="left:1001.55px;top:21.40px;width:12.50px;height:2.10px;background:#27c227;"></div>
<div style="left:1021.55px;top:5.40px;width:4.40px;height:3.00px;background:#35e835;"></div>
<div style="left:1021.55px;top:15.00px;width:4.40px;height:2.10px;background:#27c227;"></div>
<div style="left:1021.55px;top:18.20px;width:4.40px;height:2.10px;background:#27c227;"></div>
<div style="left:1021.55px;top:21.40px;width:4.40px;height:2.10px;background:#27c227;"></div>
<div style="left:1033.85px;top:5.40px;width:12.50px;height:3.00px;background:#35e835;"></div>
<div style="left:1033.85px;top:15.00px;width:12.50px;height:2.10px;background:#27c227;"></div>
<div style="left:1033.85px;top:18.20px;width:12.50px;height:2.10px;background:#27c227;"></div>
<div style="left:1033.85px;top:21.40px;width:12.50px;height:2.10px;background:#27c227;"></div>
<div style="left:1053.85px;top:5.40px;width:4.40px;height:3.00px;background:#35e835;"></div>
<div style="left:1053.85px;top:15.00px;width:4.40px;height:2.10px;background:#27c227;"></div>
<div style="left:1053.85px;top:18.20px;width:4.40px;height:2.10px;background:#27c227;"></div>
<div style="left:1053.85px;top:21.40px;width:4.40px;height:2.10px;background:#27c227;"></div>
<div style="left:1066.15px;top:5.40px;width:12.50px;height:3.00px;background:#35e835;"></div>
<div style="left:1066.15px;top:15.00px;width:12.50px;height:2.10px;background:#27c227;"></div>
<div style="left:1066.15px;top:18.20px;width:12.50px;height:2.10px;background:#27c227;"></div>
<div style="left:1066.15px;top:21.40px;width:12.50px;height:2.10px;background:#27c227;"></div>
<div style="left:1086.15px;top:5.40px;width:4.40px;height:3.00px;background:#35e835;"></div>
<div style="left:1086.15px;top:15.00px;width:4.40px;height:2.10px;background:#27c227;"></div>
<div style="left:1086.15px;top:18.20px;width:4.40px;height:2.10px;background:#27c227;"></div>
<div style="left:1086.15px;top:21.40px;width:4.40px;height:2.10px;background:#27c227;"></div>
<div style="left:1098.45px;top:5.40px;width:12.50px;height:3.00px;background:#35e835;"></div>
<div style="left:1098.45px;top:15.00px;width:12.50px;height:2.10px;background:#27c227;"></div>
<div style="left:1098.45px;top:18.20px;width:12.50px;height:2.10px;background:#27c227;"></div>
<div style="left:1098.45px;top:21.40px;width:12.50px;height:2.10px;background:#27c227;"></div>
<div style="left:1118.45px;top:5.40px;width:4.40px;height:3.00px;background:#35e835;"></div>
<div style="left:1118.45px;top:15.00px;width:4.40px;height:2.10px;background:#27c227;"></div>
<div style="left:1118.45px;top:18.20px;width:4.40px;height:2.10px;background:#27c227;"></div>
<div style="left:1118.45px;top:21.40px;width:4.40px;height:2.10px;background:#27c227;"></div>
<div style="left:1130.75px;top:5.40px;width:12.50px;height:3.00px;background:#35e835;"></div>
<div style="left:1130.75px;top:15.00px;width:12.50px;height:2.10px;background:#27c227;"></div>
<div style="left:1130.75px;top:18.20px;width:12.50px;height:2.10px;background:#27c227;"></div>
<div style="left:1130.75px;top:21.40px;width:12.50px;height:2.10px;background:#27c227;"></div>
<div style="left:1150.75px;top:5.40px;width:4.40px;height:3.00px;background:#35e835;"></div>
<div style="left:1150.75px;top:15.00px;width:4.40px;height:2.10px;background:#27c227;"></div>
<div style="left:1150.75px;top:18.20px;width:4.40px;height:2.10px;background:#27c227;"></div>
<div style="left:1150.75px;top:21.40px;width:4.40px;height:2.10px;background:#27c227;"></div>
<div style="left:1163.05px;top:5.40px;width:12.50px;height:3.00px;background:#35e835;"></div>
<div style="left:1163.05px;top:15.00px;width:12.50px;height:2.10px;background:#27c227;"></div>
<div style="left:1163.05px;top:18.20px;width:12.50px;height:2.10px;background:#27c227;"></div>
<div style="left:1163.05px;top:21.40px;width:12.50px;height:2.10px;background:#27c227;"></div>
<div style="left:1183.05px;top:5.40px;width:4.40px;height:3.00px;background:#35e835;"></div>
<div style="left:1183.05px;top:15.00px;width:4.40px;height:2.10px;background:#27c227;"></div>
<div style="left:1183.05px;top:18.20px;width:4.40px;height:2.10px;background:#27c227;"></div>
<div style="left:1183.05px;top:21.40px;width:4.40px;height:2.10px;background:#27c227;"></div>
<div style="left:1195.35px;top:5.40px;width:12.50px;height:3.00px;background:#35e835;"></div>
<div style="left:1195.35px;top:15.00px;width:12.50px;height:2.10px;background:#27c227;"></div>
<div style="left:1195.35px;top:18.20px;width:12.50px;height:2.10px;background:#27c227;"></div>
<div style="left:1195.35px;top:21.40px;width:12.50px;height:2.10px;background:#27c227;"></div>
<div style="left:1215.35px;top:5.40px;width:4.40px;height:3.00px;background:#35e835;"></div>
<div style="left:1215.35px;top:15.00px;width:4.40px;height:2.10px;background:#27c227;"></div>
<div style="left:1215.35px;top:18.20px;width:4.40px;height:2.10px;background:#27c227;"></div>
<div style="left:1215.35px;top:21.40px;width:4.40px;height:2.10px;background:#27c227;"></div>
<div style="left:1227.65px;top:5.40px;width:12.50px;height:3.00px;background:#35e835;"></div>
<div style="left:1227.65px;top:15.00px;width:12.50px;height:2.10px;background:#27c227;"></div>
<div style="left:1227.65px;top:18.20px;width:12.50px;height:2.10px;background:#27c227;"></div>
<div style="left:1227.65px;top:21.40px;width:12.50px;height:2.10px;background:#27c227;"></div>
<div style="left:1247.65px;top:5.40px;width:4.40px;height:3.00px;background:#35e835;"></div>
<div style="left:1247.65px;top:15.00px;width:4.40px;height:2.10px;background:#27c227;"></div>
<div style="left:1247.65px;top:18.20px;width:4.40px;height:2.10px;background:#27c227;"></div>
<div style="left:1247.65px;top:21.40px;width:4.40px;height:2.10px;background:#27c227;"></div>
<div style="left:1259.95px;top:5.40px;width:12.50px;height:3.00px;background:#35e835;"></div>
<div style="left:1259.95px;top:15.00px;width:12.50px;height:2.10px;background:#27c227;"></div>
<div style="left:1259.95px;top:18.20px;width:12.50px;height:2.10px;background:#27c227;"></div>
<div style="left:1259.95px;top:21.40px;width:12.50px;height:2.10px;background:#27c227;"></div>
<div style="left:1279.95px;top:5.40px;width:4.40px;height:3.00px;background:#35e835;"></div>
<div style="left:1279.95px;top:15.00px;width:4.40px;height:2.10px;background:#27c227;"></div>
<div style="left:1279.95px;top:18.20px;width:4.40px;height:2.10px;background:#27c227;"></div>
<div style="left:1279.95px;top:21.40px;width:4.40px;height:2.10px;background:#27c227;"></div>
<div style="left:1292.25px;top:5.40px;width:12.50px;height:3.00px;background:#35e835;"></div>
<div style="left:1292.25px;top:15.00px;width:12.50px;height:2.10px;background:#27c227;"></div>
<div style="left:1292.25px;top:18.20px;width:12.50px;height:2.10px;background:#27c227;"></div>
<div style="left:1292.25px;top:21.40px;width:12.50px;height:2.10px;background:#27c227;"></div>
<div style="left:1312.25px;top:5.40px;width:4.40px;height:3.00px;background:#35e835;"></div>
<div style="left:1312.25px;top:15.00px;width:4.40px;height:2.10px;background:#27c227;"></div>
<div style="left:1312.25px;top:18.20px;width:4.40px;height:2.10px;background:#27c227;"></div>
<div style="left:1312.25px;top:21.40px;width:4.40px;height:2.10px;background:#27c227;"></div>
<div style="left:1324.55px;top:5.40px;width:12.50px;height:3.00px;background:#35e835;"></div>
<div style="left:1324.55px;top:15.00px;width:12.50px;height:2.10px;background:#27c227;"></div>
<div style="left:1324.55px;top:18.20px;width:12.50px;height:2.10px;background:#27c227;"></div>
<div style="left:1324.55px;top:21.40px;width:12.50px;height:2.10px;background:#27c227;"></div>
<div style="left:1344.55px;top:5.40px;width:4.40px;height:3.00px;background:#35e835;"></div>
<div style="left:1344.55px;top:15.00px;width:4.40px;height:2.10px;background:#27c227;"></div>
<div style="left:1344.55px;top:18.20px;width:4.40px;height:2.10px;background:#27c227;"></div>
<div style="left:1344.55px;top:21.40px;width:4.40px;height:2.10px;background:#27c227;"></div>
<div style="left:1356.85px;top:5.40px;width:12.50px;height:3.00px;background:#35e835;"></div>
<div style="left:1356.85px;top:15.00px;width:12.50px;height:2.10px;background:#27c227;"></div>
<div style="left:1356.85px;top:18.20px;width:12.50px;height:2.10px;background:#27c227;"></div>
<div style="left:1356.85px;top:21.40px;width:12.50px;height:2.10px;background:#27c227;"></div>
<div style="left:1376.85px;top:5.40px;width:4.40px;height:3.00px;background:#35e835;"></div>
<div style="left:1376.85px;top:15.00px;width:4.40px;height:2.10px;background:#27c227;"></div>
<div style="left:1376.85px;top:18.20px;width:4.40px;height:2.10px;background:#27c227;"></div>
<div style="left:1376.85px;top:21.40px;width:4.40px;height:2.10px;background:#27c227;"></div>
<div style="left:1389.15px;top:5.40px;width:12.50px;height:3.00px;background:#35e835;"></div>
<div style="left:1389.15px;top:15.00px;width:12.50px;height:2.10px;background:#27c227;"></div>
<div style="left:1389.15px;top:18.20px;width:12.50px;height:2.10px;background:#27c227;"></div>
<div style="left:1389.15px;top:21.40px;width:12.50px;height:2.10px;background:#27c227;"></div>
<div style="left:1409.15px;top:5.40px;width:4.40px;height:3.00px;background:#35e835;"></div>
<div style="left:1409.15px;top:15.00px;width:4.40px;height:2.10px;background:#27c227;"></div>
<div style="left:1409.15px;top:18.20px;width:4.40px;height:2.10px;background:#27c227;"></div>
<div style="left:1409.15px;top:21.40px;width:4.40px;height:2.10px;background:#27c227;"></div>
<svg style="left:0;top:0;" width="1402" height="225" viewBox="0 0 1402 225"><g><path d="M268.75 26.00 V30.00" stroke="#35e835" stroke-width="1.6"/><rect x="265.35" y="27.00" width="6.8" height="2.00" fill="#000" stroke="#35e835" stroke-width="1.5"/><path d="M279.54 24.00 V30.00" stroke="#35e835" stroke-width="1.6"/><rect x="276.14" y="25.50" width="6.8" height="3.50" fill="#f4fff4" stroke="#35e835" stroke-width="1.5"/><path d="M290.33 25.00 V31.00" stroke="#35e835" stroke-width="1.6"/><rect x="286.93" y="26.00" width="6.8" height="4.00" fill="#000" stroke="#35e835" stroke-width="1.5"/><path d="M301.12 17.50 V27.50" stroke="#35e835" stroke-width="1.6"/><rect x="297.72" y="18.60" width="6.8" height="7.40" fill="#000" stroke="#35e835" stroke-width="1.5"/><path d="M311.91 16.00 V24.00" stroke="#35e835" stroke-width="1.6"/><rect x="308.51" y="17.00" width="6.8" height="5.00" fill="#35e835" stroke="#35e835" stroke-width="1.5"/><path d="M322.70 18.00 V23.00" stroke="#35e835" stroke-width="1.6"/><rect x="319.30" y="18.60" width="6.8" height="3.80" fill="#f4fff4" stroke="#35e835" stroke-width="1.5"/><path d="M333.49 19.00 V24.00" stroke="#35e835" stroke-width="1.6"/><rect x="330.09" y="20.50" width="6.8" height="2.00" fill="#35e835" stroke="#35e835" stroke-width="1.5"/><path d="M344.28 21.00 V29.50" stroke="#35e835" stroke-width="1.6"/><rect x="340.88" y="22.00" width="6.8" height="6.60" fill="#f4fff4" stroke="#35e835" stroke-width="1.5"/><path d="M355.07 25.00 V30.00" stroke="#35e835" stroke-width="1.6"/><rect x="351.67" y="27.00" width="6.8" height="1.60" fill="#35e835" stroke="#35e835" stroke-width="1.5"/><path d="M365.86 25.50 V29.50" stroke="#35e835" stroke-width="1.6"/><rect x="362.46" y="26.75" width="6.8" height="2.25" fill="#35e835" stroke="#35e835" stroke-width="1.5"/><path d="M376.65 24.00 V30.00" stroke="#35e835" stroke-width="1.6"/><rect x="373.25" y="25.00" width="6.8" height="4.00" fill="#000" stroke="#35e835" stroke-width="1.5"/><path d="M387.44 24.50 V28.00" stroke="#35e835" stroke-width="1.6"/><rect x="384.04" y="25.00" width="6.8" height="2.00" fill="#35e835" stroke="#35e835" stroke-width="1.5"/><path d="M398.23 25.00 V29.00" stroke="#35e835" stroke-width="1.6"/><rect x="394.83" y="26.00" width="6.8" height="2.00" fill="#35e835" stroke="#35e835" stroke-width="1.5"/><path d="M409.02 26.00 V32.50" stroke="#35e835" stroke-width="1.6"/><rect x="405.62" y="27.00" width="6.8" height="4.00" fill="#35e835" stroke="#35e835" stroke-width="1.5"/><path d="M419.81 27.00 V33.00" stroke="#35e835" stroke-width="1.6"/><rect x="416.41" y="29.50" width="6.8" height="1.60" fill="#35e835" stroke="#35e835" stroke-width="1.5"/><path d="M430.60 29.00 V38.00" stroke="#35e835" stroke-width="1.6"/><rect x="427.20" y="30.00" width="6.8" height="6.75" fill="#f4fff4" stroke="#35e835" stroke-width="1.5"/><path d="M441.39 35.50 V41.00" stroke="#35e835" stroke-width="1.6"/><rect x="437.99" y="36.75" width="6.8" height="3.25" fill="#35e835" stroke="#35e835" stroke-width="1.5"/><path d="M452.18 39.00 V50.50" stroke="#35e835" stroke-width="1.6"/><rect x="448.78" y="40.00" width="6.8" height="8.00" fill="#f4fff4" stroke="#35e835" stroke-width="1.5"/><path d="M462.97 41.00 V48.00" stroke="#35e835" stroke-width="1.6"/><rect x="459.57" y="42.00" width="6.8" height="4.50" fill="#000" stroke="#35e835" stroke-width="1.5"/><path d="M473.76 40.00 V47.50" stroke="#35e835" stroke-width="1.6"/><rect x="470.36" y="43.00" width="6.8" height="3.00" fill="#35e835" stroke="#35e835" stroke-width="1.5"/><path d="M484.55 41.00 V47.00" stroke="#35e835" stroke-width="1.6"/><rect x="481.15" y="42.50" width="6.8" height="3.00" fill="#000" stroke="#35e835" stroke-width="1.5"/><path d="M495.34 42.00 V48.00" stroke="#35e835" stroke-width="1.6"/><rect x="491.94" y="43.50" width="6.8" height="2.00" fill="#35e835" stroke="#35e835" stroke-width="1.5"/><path d="M506.13 41.00 V47.00" stroke="#35e835" stroke-width="1.6"/><rect x="502.73" y="42.50" width="6.8" height="3.00" fill="#35e835" stroke="#35e835" stroke-width="1.5"/><path d="M516.92 30.00 V44.00" stroke="#35e835" stroke-width="1.6"/><rect x="513.52" y="32.00" width="6.8" height="10.00" fill="#000" stroke="#35e835" stroke-width="1.5"/><path d="M527.71 31.50 V38.00" stroke="#35e835" stroke-width="1.6"/><rect x="524.31" y="34.50" width="6.8" height="2.00" fill="#35e835" stroke="#35e835" stroke-width="1.5"/><path d="M538.50 32.00 V39.00" stroke="#35e835" stroke-width="1.6"/><rect x="535.10" y="35.00" width="6.8" height="2.00" fill="#35e835" stroke="#35e835" stroke-width="1.5"/><path d="M549.29 28.00 V39.00" stroke="#35e835" stroke-width="1.6"/><rect x="545.89" y="29.50" width="6.8" height="8.00" fill="#000" stroke="#35e835" stroke-width="1.5"/><path d="M560.08 29.50 V35.00" stroke="#35e835" stroke-width="1.6"/><rect x="556.68" y="31.00" width="6.8" height="2.50" fill="#35e835" stroke="#35e835" stroke-width="1.5"/><path d="M570.87 28.50 V36.50" stroke="#35e835" stroke-width="1.6"/><rect x="567.47" y="31.00" width="6.8" height="2.50" fill="#000" stroke="#35e835" stroke-width="1.5"/><path d="M581.66 26.00 V32.00" stroke="#35e835" stroke-width="1.6"/><rect x="578.26" y="28.00" width="6.8" height="2.50" fill="#35e835" stroke="#35e835" stroke-width="1.5"/><path d="M592.45 26.50 V30.50" stroke="#35e835" stroke-width="1.6"/><rect x="589.05" y="27.50" width="6.8" height="2.00" fill="#35e835" stroke="#35e835" stroke-width="1.5"/><path d="M603.24 25.00 V31.00" stroke="#35e835" stroke-width="1.6"/><rect x="599.84" y="27.50" width="6.8" height="2.00" fill="#35e835" stroke="#35e835" stroke-width="1.5"/><path d="M614.03 28.00 V32.00" stroke="#35e835" stroke-width="1.6"/><rect x="610.63" y="29.50" width="6.8" height="1.60" fill="#35e835" stroke="#35e835" stroke-width="1.5"/><path d="M624.82 26.50 V33.00" stroke="#35e835" stroke-width="1.6"/><rect x="621.42" y="29.00" width="6.8" height="2.00" fill="#35e835" stroke="#35e835" stroke-width="1.5"/><path d="M635.61 27.00 V31.00" stroke="#35e835" stroke-width="1.6"/><rect x="632.21" y="28.00" width="6.8" height="2.00" fill="#35e835" stroke="#35e835" stroke-width="1.5"/><path d="M646.40 25.50 V30.00" stroke="#35e835" stroke-width="1.6"/><rect x="643.00" y="26.50" width="6.8" height="2.50" fill="#35e835" stroke="#35e835" stroke-width="1.5"/><path d="M657.19 21.00 V30.00" stroke="#35e835" stroke-width="1.6"/><rect x="653.79" y="22.00" width="6.8" height="6.00" fill="#000" stroke="#35e835" stroke-width="1.5"/><path d="M667.98 20.00 V27.00" stroke="#35e835" stroke-width="1.6"/><rect x="664.58" y="22.50" width="6.8" height="2.50" fill="#35e835" stroke="#35e835" stroke-width="1.5"/><path d="M678.77 21.00 V26.00" stroke="#35e835" stroke-width="1.6"/><rect x="675.37" y="23.00" width="6.8" height="2.00" fill="#35e835" stroke="#35e835" stroke-width="1.5"/><path d="M689.56 21.50 V26.00" stroke="#35e835" stroke-width="1.6"/><rect x="686.16" y="23.00" width="6.8" height="2.00" fill="#35e835" stroke="#35e835" stroke-width="1.5"/><path d="M700.35 20.50 V26.00" stroke="#35e835" stroke-width="1.6"/><rect x="696.95" y="23.00" width="6.8" height="2.00" fill="#35e835" stroke="#35e835" stroke-width="1.5"/><path d="M711.14 24.00 V29.00" stroke="#35e835" stroke-width="1.6"/><rect x="707.74" y="25.50" width="6.8" height="2.50" fill="#35e835" stroke="#35e835" stroke-width="1.5"/><path d="M721.93 25.50 V42.00" stroke="#35e835" stroke-width="1.6"/><rect x="718.53" y="27.40" width="6.8" height="13.10" fill="#f4fff4" stroke="#35e835" stroke-width="1.5"/><path d="M732.72 40.00 V46.00" stroke="#35e835" stroke-width="1.6"/><rect x="729.32" y="41.00" width="6.8" height="3.50" fill="#35e835" stroke="#35e835" stroke-width="1.5"/><path d="M743.51 38.00 V45.50" stroke="#35e835" stroke-width="1.6"/><rect x="740.11" y="39.00" width="6.8" height="5.00" fill="#000" stroke="#35e835" stroke-width="1.5"/><path d="M754.30 32.00 V42.00" stroke="#35e835" stroke-width="1.6"/><rect x="750.90" y="34.00" width="6.8" height="6.00" fill="#000" stroke="#35e835" stroke-width="1.5"/><path d="M765.09 30.50 V50.00" stroke="#35e835" stroke-width="1.6"/><rect x="761.69" y="33.00" width="6.8" height="15.00" fill="#f4fff4" stroke="#35e835" stroke-width="1.5"/><path d="M775.88 41.00 V53.00" stroke="#35e835" stroke-width="1.6"/><rect x="772.48" y="45.00" width="6.8" height="2.00" fill="#35e835" stroke="#35e835" stroke-width="1.5"/><path d="M786.67 43.00 V51.00" stroke="#35e835" stroke-width="1.6"/><rect x="783.27" y="46.50" width="6.8" height="1.60" fill="#35e835" stroke="#35e835" stroke-width="1.5"/><path d="M797.46 46.50 V54.00" stroke="#35e835" stroke-width="1.6"/><rect x="794.06" y="49.00" width="6.8" height="2.00" fill="#35e835" stroke="#35e835" stroke-width="1.5"/><path d="M808.25 42.00 V53.00" stroke="#35e835" stroke-width="1.6"/><rect x="804.85" y="46.50" width="6.8" height="1.60" fill="#35e835" stroke="#35e835" stroke-width="1.5"/><path d="M819.04 50.00 V57.50" stroke="#35e835" stroke-width="1.6"/><rect x="815.64" y="52.50" width="6.8" height="2.00" fill="#35e835" stroke="#35e835" stroke-width="1.5"/><path d="M829.83 44.00 V56.50" stroke="#35e835" stroke-width="1.6"/><rect x="826.43" y="47.00" width="6.8" height="6.00" fill="#000" stroke="#35e835" stroke-width="1.5"/><path d="M840.62 38.50 V50.50" stroke="#35e835" stroke-width="1.6"/><rect x="837.22" y="39.70" width="6.8" height="9.00" fill="#000" stroke="#35e835" stroke-width="1.5"/><path d="M851.41 38.00 V46.00" stroke="#35e835" stroke-width="1.6"/><rect x="848.01" y="39.50" width="6.8" height="4.50" fill="#f4fff4" stroke="#35e835" stroke-width="1.5"/><path d="M862.20 40.00 V48.00" stroke="#35e835" stroke-width="1.6"/><rect x="858.80" y="42.00" width="6.8" height="3.00" fill="#000" stroke="#35e835" stroke-width="1.5"/><path d="M872.99 42.00 V49.00" stroke="#35e835" stroke-width="1.6"/><rect x="869.59" y="44.00" width="6.8" height="2.50" fill="#35e835" stroke="#35e835" stroke-width="1.5"/><path d="M883.78 44.00 V51.00" stroke="#35e835" stroke-width="1.6"/><rect x="880.38" y="46.00" width="6.8" height="2.50" fill="#35e835" stroke="#35e835" stroke-width="1.5"/><path d="M894.57 45.00 V52.00" stroke="#35e835" stroke-width="1.6"/><rect x="891.17" y="47.00" width="6.8" height="2.00" fill="#35e835" stroke="#35e835" stroke-width="1.5"/><path d="M905.36 44.00 V50.00" stroke="#35e835" stroke-width="1.6"/><rect x="901.96" y="45.50" width="6.8" height="2.50" fill="#000" stroke="#35e835" stroke-width="1.5"/><path d="M916.15 39.00 V47.00" stroke="#35e835" stroke-width="1.6"/><rect x="912.75" y="42.50" width="6.8" height="2.00" fill="#35e835" stroke="#35e835" stroke-width="1.5"/><path d="M926.94 40.00 V48.00" stroke="#35e835" stroke-width="1.6"/><rect x="923.54" y="43.00" width="6.8" height="2.50" fill="#35e835" stroke="#35e835" stroke-width="1.5"/><path d="M937.73 37.00 V44.50" stroke="#35e835" stroke-width="1.6"/><rect x="934.33" y="38.50" width="6.8" height="4.50" fill="#000" stroke="#35e835" stroke-width="1.5"/><path d="M948.52 34.50 V41.00" stroke="#35e835" stroke-width="1.6"/><rect x="945.12" y="35.50" width="6.8" height="4.50" fill="#000" stroke="#35e835" stroke-width="1.5"/><path d="M959.31 34.00 V42.50" stroke="#35e835" stroke-width="1.6"/><rect x="955.91" y="35.00" width="6.8" height="6.30" fill="#f4fff4" stroke="#35e835" stroke-width="1.5"/><path d="M970.10 39.00 V59.00" stroke="#35e835" stroke-width="1.6"/><rect x="966.70" y="40.50" width="6.8" height="16.90" fill="#f4fff4" stroke="#35e835" stroke-width="1.5"/><path d="M980.89 53.00 V61.00" stroke="#35e835" stroke-width="1.6"/><rect x="977.49" y="56.00" width="6.8" height="3.00" fill="#35e835" stroke="#35e835" stroke-width="1.5"/><path d="M991.68 50.50 V62.00" stroke="#35e835" stroke-width="1.6"/><rect x="988.28" y="52.50" width="6.8" height="8.50" fill="#000" stroke="#35e835" stroke-width="1.5"/><path d="M1002.47 52.00 V63.00" stroke="#35e835" stroke-width="1.6"/><rect x="999.07" y="53.60" width="6.8" height="6.40" fill="#f4fff4" stroke="#35e835" stroke-width="1.5"/><path d="M1013.26 59.00 V67.00" stroke="#35e835" stroke-width="1.6"/><rect x="1009.86" y="61.50" width="6.8" height="2.50" fill="#35e835" stroke="#35e835" stroke-width="1.5"/><path d="M1024.05 61.00 V69.00" stroke="#35e835" stroke-width="1.6"/><rect x="1020.65" y="64.00" width="6.8" height="2.50" fill="#35e835" stroke="#35e835" stroke-width="1.5"/><path d="M1034.84 63.00 V71.00" stroke="#35e835" stroke-width="1.6"/><rect x="1031.44" y="66.50" width="6.8" height="2.00" fill="#35e835" stroke="#35e835" stroke-width="1.5"/><path d="M1045.63 65.00 V75.00" stroke="#35e835" stroke-width="1.6"/><rect x="1042.23" y="69.00" width="6.8" height="1.60" fill="#35e835" stroke="#35e835" stroke-width="1.5"/><path d="M1056.42 58.00 V72.00" stroke="#35e835" stroke-width="1.6"/><rect x="1053.02" y="64.00" width="6.8" height="5.70" fill="#000" stroke="#35e835" stroke-width="1.5"/><path d="M1067.21 61.00 V72.00" stroke="#35e835" stroke-width="1.6"/><rect x="1063.81" y="65.00" width="6.8" height="2.50" fill="#35e835" stroke="#35e835" stroke-width="1.5"/><path d="M1078.00 52.50 V219.70" stroke="#35e835" stroke-width="1.6"/><rect x="1074.60" y="67.50" width="6.8" height="78.50" fill="#f4fff4" stroke="#35e835" stroke-width="1.5"/><path d="M1088.79 144.00 V192.00" stroke="#35e835" stroke-width="1.6"/><rect x="1085.39" y="144.70" width="6.8" height="7.30" fill="#f4fff4" stroke="#35e835" stroke-width="1.5"/><path d="M1099.58 143.60 V192.00" stroke="#35e835" stroke-width="1.6"/><rect x="1096.18" y="152.00" width="6.8" height="34.00" fill="#f4fff4" stroke="#35e835" stroke-width="1.5"/></g><path d="M263.0 26.8 L307.0 25.0 L332.0 23.6 L344.5 23.0 L369.5 24.0 L394.5 25.0 L419.5 26.0 L439.5 28.5 L457.0 30.5 L477.0 33.7 L514.5 36.8 L552.0 38.0 L589.5 36.8 L627.0 33.0 L664.5 28.5 L702.0 26.6 L739.5 28.5 L777.0 33.0 L814.5 36.8 L852.0 41.0 L889.5 45.5 L927.0 45.5 L964.5 43.5 L1002.0 47.0 L1039.5 51.8 L1062.0 55.5 L1077.0 64.0 L1089.0 73.0 L1099.5 81.0" stroke="#d81818" stroke-width="1.6" fill="none" stroke-linejoin="round"/><path d="M114 18 L168 18.599999999999994" stroke="#c81414" stroke-width="1.4" fill="none"/></svg>
<div style="left:0.00px;top:185.60px;width:1402.00px;height:1.20px;background:#b9c0c6;"></div>
</div>
<div style="left:262.49px;top:158.5px;width:3px;height:2.75px;background:#27c427;"></div>
<div style="left:273.28000000000003px;top:157.5px;width:6.4px;height:2.2px;background:#1a9c1a;"></div>
<div style="left:284.07px;top:159.5px;width:3px;height:2.75px;background:#1a9c1a;"></div>
<div style="left:294.86px;top:158.5px;width:6.4px;height:2.2px;background:#27c427;"></div>
<div style="left:305.65000000000003px;top:157.0px;width:3px;height:2.475px;background:#1a9c1a;"></div>
<div style="left:316.44px;top:158.5px;width:6.4px;height:3.0250000000000004px;background:#1a9c1a;"></div>
<div style="left:327.22999999999996px;top:159.5px;width:3px;height:2.75px;background:#27c427;"></div>
<div style="left:338.02px;top:158.0px;width:6.4px;height:2.475px;background:#1a9c1a;"></div>
<div style="left:348.81px;top:159.0px;width:3px;height:2.475px;background:#1a9c1a;"></div>
<div style="left:359.59999999999997px;top:159.5px;width:6.4px;height:3.0250000000000004px;background:#27c427;"></div>
<div style="left:370.39px;top:158.5px;width:3px;height:2.475px;background:#1a9c1a;"></div>
<div style="left:381.18px;top:160.0px;width:6.4px;height:2.475px;background:#1a9c1a;"></div>
<div style="left:391.96999999999997px;top:160.5px;width:3px;height:2.75px;background:#27c427;"></div>
<div style="left:402.76px;top:159.5px;width:6.4px;height:3.0250000000000004px;background:#1a9c1a;"></div>
<span class="t" style="left:150.00px;top:144.60px;font-size:12.6px;line-height:16px;color:#f2f2f2;transform:scale(1.2430,1.000);">XAUUSD..,M1</span>
<span class="t" style="left:260.20px;top:144.40px;font-size:12.4px;line-height:16px;color:#f4f4f4;transform:scale(0.9427,1.000);text-shadow:0 0 1px #000,0 0 2px #000;">1814.69</span>
<span class="t" style="left:308.80px;top:144.40px;font-size:12.4px;line-height:16px;color:#f4f4f4;transform:scale(0.9427,1.000);text-shadow:0 0 1px #000,0 0 2px #000;">1815.13</span>
<span class="t" style="left:357.00px;top:144.40px;font-size:12.4px;line-height:16px;color:#f4f4f4;transform:scale(0.9427,1.000);text-shadow:0 0 1px #000,0 0 2px #000;">1812.58</span>
<span class="t" style="left:406.00px;top:144.40px;font-size:12.4px;line-height:16px;color:#f4f4f4;transform:scale(0.9427,1.000);text-shadow:0 0 1px #000,0 0 2px #000;">1812.78</span>
<div style="left:148px;top:142px;width:115px;height:21px;overflow:hidden;">
<span class="t" style="left:6.00px;top:-3.00px;font-size:13px;line-height:17px;color:#fff;font-weight:bold;transform:scale(0.9822,1.000);">#4192837 sell 0.08</span>
<span class="t" style="left:8.00px;top:0.50px;font-size:13px;line-height:17px;color:#fff;font-weight:bold;transform:scale(0.9822,1.000);">#4192838 sell 0.08</span>
<span class="t" style="left:3.00px;top:4.00px;font-size:13px;line-height:17px;color:#fff;font-weight:bold;transform:scale(0.9822,1.000);">#4192840 sell 0.08</span>
<span class="t" style="left:11.00px;top:-1.50px;font-size:13px;line-height:17px;color:#fff;font-weight:bold;transform:scale(0.9822,1.000);">#4192843 sell 0.08</span>
<span class="t" style="left:7.00px;top:6.00px;font-size:13px;line-height:17px;color:#fff;font-weight:bold;transform:scale(0.9822,1.000);">#4192846 sell 0.08</span>
<span class="t" style="left:5.00px;top:-5.00px;font-size:13px;line-height:17px;color:#fff;font-weight:bold;transform:scale(0.9822,1.000);">#4192851 sell 0.08</span>
<span class="t" style="left:10.00px;top:2.50px;font-size:13px;line-height:17px;color:#f4f4f4;font-weight:bold;transform:scale(0.9822,1.000);">#4192852 sell 0.08</span>
<span class="t" style="left:2.00px;top:-0.50px;font-size:13px;line-height:17px;color:#fff;font-weight:bold;transform:scale(0.9822,1.000);">#4192855 sell 0.08</span>
<span class="t" style="left:6.00px;top:-1.50px;font-size:7.5px;line-height:10px;color:#000;font-weight:bold;transform:scale(1.0000,1.000);"># 1 7 l</span>
<span class="t" style="left:44.00px;top:3.00px;font-size:7.5px;line-height:10px;color:#000;font-weight:bold;transform:scale(1.0000,1.000);">. 8 1 2</span>
<span class="t" style="left:18.00px;top:8.50px;font-size:7.5px;line-height:10px;color:#061006;font-weight:bold;transform:scale(1.0000,1.000);">4 9 6 .</span>
<span class="t" style="left:74.00px;top:-1.00px;font-size:7.5px;line-height:10px;color:#000;font-weight:bold;transform:scale(1.0000,1.000);">l 0 : 0</span>
<span class="t" style="left:62.00px;top:7.50px;font-size:7.5px;line-height:10px;color:#0a180a;font-weight:bold;transform:scale(1.0000,1.000);">1 . 2</span>
<span class="t" style="left:92.00px;top:4.00px;font-size:7.5px;line-height:10px;color:#000;font-weight:bold;transform:scale(1.0000,1.000);">1 |</span>
<span class="t" style="left:20.00px;top:1.00px;font-size:8px;line-height:10px;color:#e03030;transform:scale(1.0000,1.000);">1822.93</span>
<span class="t" style="left:52.00px;top:5.00px;font-size:8px;line-height:10px;color:#30c8d8;transform:scale(1.0000,1.000);">1822.16</span>
<span class="t" style="left:84.00px;top:1.00px;font-size:8px;line-height:10px;color:#e8e030;transform:scale(1.0000,1.000);">0.08</span>
<div style="left:0;top:4px;width:14px;height:2px;background:#d01818;"></div>
<div style="left:1px;top:9px;width:9px;height:8px;background:#1a1a1a;"></div>
<div style="left:0;top:12px;width:7px;height:5px;background:#28d228;"></div>
<div style="left:0;top:18.5px;width:115px;height:2.5px;background:repeating-linear-gradient(90deg,#2be02b 0 7px,transparent 7px 12px);"></div>
</div>
<div style="left:152px;top:165px;width:62px;height:31px;background:#4646e6;"></div>
<div style="left:157px;top:192.6px;width:51px;height:1.1px;background:#2828c6;"></div>
<div style="left:157px;top:194.6px;width:51px;height:1.1px;background:#6c6cf4;"></div>
<div style="left:351px;top:165px;width:61px;height:31px;background:#4646e6;"></div>
<div style="left:356px;top:192.6px;width:51px;height:1.1px;background:#2828c6;"></div>
<div style="left:356px;top:194.6px;width:51px;height:1.1px;background:#6c6cf4;"></div>
<div style="left:152px;top:195px;width:130px;height:45px;background:linear-gradient(180deg,#3a3ae0 0%,#2424cc 50%,#1212b2 100%);"></div>
<div style="left:284.5px;top:195px;width:127.5px;height:45px;background:linear-gradient(180deg,#3a3ae0 0%,#2424cc 50%,#1212b2 100%);"></div>
<div style="left:157px;top:194.6px;width:51px;height:1.1px;background:#6c6cf4;"></div>
<div style="left:356px;top:194.6px;width:51px;height:1.1px;background:#6c6cf4;"></div>
<div style="left:216.5px;top:166px;width:131.5px;height:26.5px;background:#ffffff;border:1px solid #cfcfcf;"></div>
<div style="left:217px;top:166.5px;width:26.5px;height:25.5px;background:#e3e3e3;border-right:1px solid #c2c2c2;"></div>
<div style="left:321px;top:166.5px;width:26.5px;height:25.5px;background:#e6e6e6;border-left:1px solid #c2c2c2;"></div>
<svg style="left:225px;top:174px;" width="12" height="10" viewBox="0 0 12 10"><path d="M1.5 2.5 L5.5 6.5 L9.5 2.5" stroke="#333" stroke-width="1.8" fill="none"/></svg>
<svg style="left:328.5px;top:174px;" width="12" height="10" viewBox="0 0 12 10"><path d="M1.5 6.5 L5.5 2.5 L9.5 6.5" stroke="#333" stroke-width="1.8" fill="none"/></svg>
<span class="t" style="left:165.50px;top:169.30px;font-size:15.6px;line-height:20px;color:#e9e9ff;transform:scale(0.8407,1.000);">SELL</span>
<span class="t" style="left:365.00px;top:169.30px;font-size:15.6px;line-height:20px;color:#e9e9ff;transform:scale(0.9381,1.000);">BUY</span>
<span class="t" style="left:287.60px;top:168.60px;font-size:15.2px;line-height:20px;color:#444;transform:scale(0.8828,1.000);">0.01</span>
<span class="t" style="left:175.70px;top:215.30px;font-size:17.2px;line-height:22px;color:#f4f4ff;font-weight:bold;transform:scale(0.9140,1.000);">1812</span>
<span class="t" style="left:218.60px;top:190.60px;font-size:41.6px;line-height:54px;color:#fafaff;transform:scale(0.9269,1.000);">78</span>
<span class="t" style="left:307.00px;top:215.30px;font-size:17.2px;line-height:22px;color:#f4f4ff;font-weight:bold;transform:scale(0.9323,1.000);">1813</span>
<span class="t" style="left:349.00px;top:190.60px;font-size:41.6px;line-height:54px;color:#fafaff;transform:scale(0.8987,1.000);">03</span>
<span class="t" style="left:1431.00px;top:146.00px;font-size:12.4px;line-height:16px;color:#f0f0f0;transform:scale(1.0048,1.000);">Bonus Master.v1</span>
<svg style="left:1526px;top:145px;" width="18" height="18" viewBox="0 0 18 18"><circle cx="9" cy="9" r="7.2" fill="none" stroke="#e6e6e6" stroke-width="1.3"/><circle cx="6.4" cy="6.8" r="1" fill="#e6e6e6"/><circle cx="11.6" cy="6.8" r="1" fill="#e6e6e6"/><path d="M5.5 12.6 C7.5 10 10.5 10 12.5 12.6" stroke="#e6e6e6" stroke-width="1.2" fill="none"/></svg>
<div style="left:1551px;top:185.5px;width:4px;height:1px;background:#e2e2e2;"></div>
<span class="t" style="left:1557.60px;top:178.00px;font-size:12.4px;line-height:16px;color:#ececec;transform:scale(1.0500,1.000);">1820.90</span>
<div style="left:1551px;top:229.8px;width:4px;height:1px;background:#e2e2e2;"></div>
<span class="t" style="left:1557.60px;top:222.30px;font-size:12.4px;line-height:16px;color:#ececec;transform:scale(1.0500,1.000);">1818.35</span>
<div style="left:1551px;top:274.0px;width:4px;height:1px;background:#e2e2e2;"></div>
<span class="t" style="left:1557.60px;top:266.50px;font-size:12.4px;line-height:16px;color:#ececec;transform:scale(1.0500,1.000);">1815.85</span>
<div style="left:1551px;top:318.2px;width:4px;height:1px;background:#e2e2e2;"></div>
<span class="t" style="left:1557.60px;top:310.70px;font-size:12.4px;line-height:16px;color:#ececec;transform:scale(1.0500,1.000);">1813.30</span>
<div style="left:1551px;top:362.5px;width:4px;height:1px;background:#e2e2e2;"></div>
<span class="t" style="left:1557.60px;top:355.00px;font-size:12.4px;line-height:16px;color:#ececec;transform:scale(1.0500,1.000);">1810.80</span>
<div style="left:1552px;top:321.5px;width:60px;height:14.5px;background:#f4f4f4;"></div>
<div style="left:1551px;top:327.6px;width:3px;height:1.2px;background:#111;"></div>
<span class="t" style="left:1557.60px;top:320.20px;font-size:12.4px;line-height:16px;color:#111;transform:scale(1.0500,1.000);">1812.78</span>
<div style="left:147.1px;top:368px;width:1.2px;height:4px;background:#e2e2e2;"></div>
<span class="t" style="left:145.80px;top:371.20px;font-size:13px;line-height:17px;color:#ececec;transform:scale(0.9586,1.000);">6 Oct 2023</span>
<div style="left:233.39999999999998px;top:368px;width:1.2px;height:4px;background:#e2e2e2;"></div>
<span class="t" style="left:232.10px;top:371.20px;font-size:13px;line-height:17px;color:#ececec;transform:scale(0.9959,1.000);">6 Oct 13:58</span>
<div style="left:319.7px;top:368px;width:1.2px;height:4px;background:#e2e2e2;"></div>
<span class="t" style="left:318.40px;top:371.20px;font-size:13px;line-height:17px;color:#ececec;transform:scale(0.9959,1.000);">6 Oct 14:06</span>
<div style="left:406.0px;top:368px;width:1.2px;height:4px;background:#e2e2e2;"></div>
<span class="t" style="left:404.70px;top:371.20px;font-size:13px;line-height:17px;color:#ececec;transform:scale(0.9959,1.000);">6 Oct 14:14</span>
<div style="left:492.29999999999995px;top:368px;width:1.2px;height:4px;background:#e2e2e2;"></div>
<span class="t" style="left:491.00px;top:371.20px;font-size:13px;line-height:17px;color:#ececec;transform:scale(0.9959,1.000);">6 Oct 14:22</span>
<div style="left:578.6px;top:368px;width:1.2px;height:4px;background:#e2e2e2;"></div>
<span class="t" style="left:577.30px;top:371.20px;font-size:13px;line-height:17px;color:#ececec;transform:scale(0.9959,1.000);">6 Oct 14:30</span>
<div style="left:664.9px;top:368px;width:1.2px;height:4px;background:#e2e2e2;"></div>
<span class="t" style="left:663.60px;top:371.20px;font-size:13px;line-height:17px;color:#ececec;transform:scale(0.9959,1.000);">6 Oct 14:38</span>
<div style="left:751.2px;top:368px;width:1.2px;height:4px;background:#e2e2e2;"></div>
<span class="t" style="left:749.90px;top:371.20px;font-size:13px;line-height:17px;color:#ececec;transform:scale(0.9959,1.000);">6 Oct 14:46</span>
<div style="left:837.5px;top:368px;width:1.2px;height:4px;background:#e2e2e2;"></div>
<span class="t" style="left:836.20px;top:371.20px;font-size:13px;line-height:17px;color:#ececec;transform:scale(0.9959,1.000);">6 Oct 14:54</span>
<div style="left:923.8px;top:368px;width:1.2px;height:4px;background:#e2e2e2;"></div>
<span class="t" style="left:922.50px;top:371.20px;font-size:13px;line-height:17px;color:#ececec;transform:scale(0.9959,1.000);">6 Oct 15:02</span>
<div style="left:1010.1px;top:368px;width:1.2px;height:4px;background:#e2e2e2;"></div>
<span class="t" style="left:1008.80px;top:371.20px;font-size:13px;line-height:17px;color:#ececec;transform:scale(0.9959,1.000);">6 Oct 15:10</span>
<div style="left:1096.3999999999999px;top:368px;width:1.2px;height:4px;background:#e2e2e2;"></div>
<span class="t" style="left:1095.10px;top:371.20px;font-size:13px;line-height:17px;color:#ececec;transform:scale(0.9959,1.000);">6 Oct 15:18</span>
<div style="left:1182.6999999999998px;top:368px;width:1.2px;height:4px;background:#e2e2e2;"></div>
<span class="t" style="left:1181.40px;top:371.20px;font-size:13px;line-height:17px;color:#ececec;transform:scale(0.9959,1.000);">6 Oct 15:26</span>
<div style="left:143px;top:395px;width:1469px;height:30px;background:#f3f3f3;"></div>
<div style="left:143px;top:395px;width:1469px;height:1.5px;background:#8f8f8f;"></div>
<div style="left:143px;top:396.5px;width:1469px;height:1.5px;background:#ffffff;"></div>
<div style="left:150px;top:397px;width:123px;height:26px;background:#ececec;border:2px solid #4c4c4c;border-top:none;border-right-width:2px;"></div>
<div style="left:143.5px;top:400px;width:6.5px;height:23px;background:transparent;border-left:1.5px solid #7a7a7a;border-bottom:1.5px solid #7a7a7a;"></div>
<span class="t" style="left:162.80px;top:400.60px;font-size:15.7px;line-height:20px;color:#4a4a4a;transform:scale(0.9447,1.000);">XAUUSD..,M1</span>
<span class="t" style="left:290.30px;top:400.60px;font-size:15.7px;line-height:20px;color:#8d8d8d;transform:scale(0.8881,1.000);">GBPJPY..,H1</span>
<div style="left:392px;top:402px;width:1.5px;height:19px;background:#8d8d8d;"></div>
<span class="t" style="left:407.00px;top:400.60px;font-size:15.7px;line-height:20px;color:#8d8d8d;transform:scale(0.9215,1.000);">AUDJPY..,H1</span>
<div style="left:511px;top:402px;width:1.5px;height:19px;background:#8d8d8d;"></div>
<span class="t" style="left:526.00px;top:400.60px;font-size:15.7px;line-height:20px;color:#8d8d8d;transform:scale(0.9298,1.000);">USDCHF..,H1</span>
<div style="left:634px;top:402px;width:1.5px;height:19px;background:#8d8d8d;"></div>
<svg style="left:1567px;top:404px;" width="10" height="11" viewBox="0 0 10 11"><path d="M7.5 1 L2 5.5 L7.5 10 Z" fill="#9a9a9a"/></svg>
<svg style="left:1588px;top:404px;" width="10" height="11" viewBox="0 0 10 11"><path d="M2.5 1 L8 5.5 L2.5 10 Z" fill="#9a9a9a"/></svg>
<div style="left:-12px;top:424px;width:1624px;height:8px;background:#efefef;"></div>
<div style="left:0px;top:424px;width:1600px;height:2.5px;background:linear-gradient(90deg,#fbfbfb 0,#fbfbfb 60%,#f1f1f1 85%);"></div>
<div style="left:0px;top:426.5px;width:1600px;height:5px;background:linear-gradient(90deg,#dcdcdc 0,#dedede 40%,#e6e6e6 65%,#efefef 90%);"></div>
<div style="left:-12px;top:431px;width:1624px;height:26px;background:#ffffff;"></div>
<div style="left:-12px;top:456px;width:1624px;height:1px;background:#d6d6d6;"></div>
<div style="left:-12px;top:457px;width:1624px;height:27px;background:#ffffff;"></div>
<div style="left:-12px;top:483px;width:1624px;height:1px;background:#d9d9d9;"></div>
<div style="left:-12px;top:484px;width:1624px;height:27px;background:#e9e9e9;"></div>
<div style="left:-12px;top:510px;width:1624px;height:1px;background:#d9d9d9;"></div>
<div style="left:-12px;top:511px;width:1624px;height:27px;background:#ffffff;"></div>
<div style="left:-12px;top:537px;width:1624px;height:1px;background:#d9d9d9;"></div>
<div style="left:-12px;top:538px;width:1624px;height:27px;background:#e9e9e9;"></div>
<div style="left:-12px;top:564px;width:1624px;height:1px;background:#d9d9d9;"></div>
<div style="left:-12px;top:565px;width:1624px;height:27px;background:#ffffff;"></div>
<div style="left:-12px;top:591px;width:1624px;height:1px;background:#d9d9d9;"></div>
<div style="left:-12px;top:592px;width:1624px;height:27px;background:#e9e9e9;"></div>
<div style="left:-12px;top:618px;width:1624px;height:1px;background:#d9d9d9;"></div>
<div style="left:-12px;top:619px;width:1624px;height:27px;background:#ffffff;"></div>
<div style="left:-12px;top:645px;width:1624px;height:1px;background:#d9d9d9;"></div>
<div style="left:-12px;top:646px;width:1624px;height:27px;background:#e9e9e9;"></div>
<div style="left:-12px;top:672px;width:1624px;height:1px;background:#d9d9d9;"></div>
<div style="left:-12px;top:673px;width:1624px;height:27px;background:#ffffff;"></div>
<div style="left:-12px;top:699px;width:1624px;height:1px;background:#d9d9d9;"></div>
<div style="left:-12px;top:700px;width:1624px;height:27px;background:#e9e9e9;"></div>
<div style="left:-12px;top:726px;width:1624px;height:1px;background:#d9d9d9;"></div>
<div style="left:-12px;top:727px;width:1624px;height:27px;background:#ffffff;"></div>
<div style="left:-12px;top:753px;width:1624px;height:1px;background:#d9d9d9;"></div>
<div style="left:77.5px;top:432px;width:2px;height:321px;background:#dadada;"></div>
<div style="left:310.5px;top:432px;width:2px;height:321px;background:#dadada;"></div>
<div style="left:426.5px;top:432px;width:2px;height:321px;background:#dadada;"></div>
<div style="left:515.5px;top:432px;width:2px;height:321px;background:#dadada;"></div>
<div style="left:632.5px;top:432px;width:2px;height:321px;background:#dadada;"></div>
<div style="left:761.5px;top:432px;width:2px;height:321px;background:#dadada;"></div>
<div style="left:890.5px;top:432px;width:2px;height:321px;background:#dadada;"></div>
<div style="left:1019.5px;top:432px;width:2px;height:321px;background:#dadada;"></div>
<div style="left:1149.5px;top:432px;width:2px;height:321px;background:#dadada;"></div>
<div style="left:1278.5px;top:432px;width:2px;height:321px;background:#dadada;"></div>
<div style="left:1408.5px;top:432px;width:2px;height:321px;background:#dadada;"></div>
<span class="t" style="left:270.00px;top:434.10px;font-size:16.4px;line-height:21px;color:#333;transform:scale(0.9341,1.000);">Time</span>
<span class="t" style="left:386.00px;top:434.10px;font-size:16.4px;line-height:21px;color:#333;transform:scale(0.9480,1.000);">Type</span>
<span class="t" style="left:484.00px;top:434.10px;font-size:16.4px;line-height:21px;color:#333;transform:scale(0.8329,1.000);">Size</span>
<span class="t" style="left:572.50px;top:434.10px;font-size:16.4px;line-height:21px;color:#333;transform:scale(0.9888,1.000);">Symbol</span>
<span class="t" style="left:721.00px;top:434.10px;font-size:16.4px;line-height:21px;color:#333;transform:scale(0.9247,1.000);">Price</span>
<span class="t" style="left:854.00px;top:434.10px;font-size:16.4px;line-height:21px;color:#333;transform:scale(0.9028,1.000);">S / L</span>
<span class="t" style="left:981.00px;top:434.10px;font-size:16.4px;line-height:21px;color:#333;transform:scale(0.9660,1.000);">T / P</span>
<span class="t" style="left:1109.00px;top:434.10px;font-size:16.4px;line-height:21px;color:#333;transform:scale(0.9247,1.000);">Price</span>
<span class="t" style="left:1182.50px;top:434.10px;font-size:16.4px;line-height:21px;color:#333;transform:scale(0.9987,1.000);">Commission</span>
<span class="t" style="left:1364.00px;top:434.10px;font-size:16.4px;line-height:21px;color:#333;transform:scale(0.9165,1.000);">Swap</span>
<span class="t" style="left:1561.00px;top:434.10px;font-size:16.4px;line-height:21px;color:#333;transform:scale(1.0837,1.000);">Profit</span>
<span class="t" style="left:174.44px;top:459.00px;font-size:16.75px;line-height:22px;color:#2e2e2e;transform:scale(0.8650,1.000);">2023.10.03 18:37:08</span>
<span class="t" style="left:400.50px;top:459.00px;font-size:16.75px;line-height:22px;color:#2e2e2e;transform:scale(0.8985,1.000);">sell</span>
<span class="t" style="left:485.27px;top:459.00px;font-size:16.75px;line-height:22px;color:#2e2e2e;transform:scale(0.8450,1.000);">0.08</span>
<span class="t" style="left:571.00px;top:459.00px;font-size:16.75px;line-height:22px;color:#2e2e2e;transform:scale(0.9208,1.000);">xauusd..</span>
<span class="t" style="left:706.70px;top:459.00px;font-size:16.75px;line-height:22px;color:#2e2e2e;transform:scale(0.8450,1.000);">1823.02</span>
<span class="t" style="left:860.07px;top:459.00px;font-size:16.75px;line-height:22px;color:#2e2e2e;transform:scale(0.8450,1.000);">0.00</span>
<span class="t" style="left:989.27px;top:459.00px;font-size:16.75px;line-height:22px;color:#2e2e2e;transform:scale(0.8450,1.000);">0.00</span>
<span class="t" style="left:1094.40px;top:459.00px;font-size:16.75px;line-height:22px;color:#2e2e2e;transform:scale(0.8450,1.000);">1813.03</span>
<span class="t" style="left:1247.67px;top:459.00px;font-size:16.75px;line-height:22px;color:#2e2e2e;transform:scale(0.8450,1.000);">0.00</span>
<span class="t" style="left:1376.87px;top:459.00px;font-size:16.75px;line-height:22px;color:#2e2e2e;transform:scale(0.8450,1.000);">5.20</span>
<span class="t" style="left:1540.12px;top:459.00px;font-size:16.75px;line-height:22px;color:#2e2e2e;transform:scale(0.8450,1.000);">79.92</span>
<svg style="left:1588.5px;top:465.5px;" width="10" height="10" viewBox="0 0 10 10"><path d="M1 1 L9 9 M9 1 L1 9" stroke="#9a9a9a" stroke-width="2" fill="none"/></svg>
<span class="t" style="left:174.44px;top:486.00px;font-size:16.75px;line-height:22px;color:#2e2e2e;transform:scale(0.8650,1.000);">2023.10.03 18:37:12</span>
<span class="t" style="left:400.50px;top:486.00px;font-size:16.75px;line-height:22px;color:#2e2e2e;transform:scale(0.8985,1.000);">sell</span>
<span class="t" style="left:485.27px;top:486.00px;font-size:16.75px;line-height:22px;color:#2e2e2e;transform:scale(0.8450,1.000);">0.08</span>
<span class="t" style="left:571.00px;top:486.00px;font-size:16.75px;line-height:22px;color:#2e2e2e;transform:scale(0.9208,1.000);">xauusd..</span>
<span class="t" style="left:706.70px;top:486.00px;font-size:16.75px;line-height:22px;color:#2e2e2e;transform:scale(0.8450,1.000);">1822.93</span>
<span class="t" style="left:860.07px;top:486.00px;font-size:16.75px;line-height:22px;color:#2e2e2e;transform:scale(0.8450,1.000);">0.00</span>
<span class="t" style="left:989.27px;top:486.00px;font-size:16.75px;line-height:22px;color:#2e2e2e;transform:scale(0.8450,1.000);">0.00</span>
<span class="t" style="left:1094.40px;top:486.00px;font-size:16.75px;line-height:22px;color:#2e2e2e;transform:scale(0.8450,1.000);">1813.03</span>
<span class="t" style="left:1247.67px;top:486.00px;font-size:16.75px;line-height:22px;color:#2e2e2e;transform:scale(0.8450,1.000);">0.00</span>
<span class="t" style="left:1376.87px;top:486.00px;font-size:16.75px;line-height:22px;color:#2e2e2e;transform:scale(0.8450,1.000);">5.20</span>
<span class="t" style="left:1540.12px;top:486.00px;font-size:16.75px;line-height:22px;color:#2e2e2e;transform:scale(0.8450,1.000);">79.20</span>
<svg style="left:1588.5px;top:492.5px;" width="10" height="10" viewBox="0 0 10 10"><path d="M1 1 L9 9 M9 1 L1 9" stroke="#9a9a9a" stroke-width="2" fill="none"/></svg>
<span class="t" style="left:174.44px;top:513.00px;font-size:16.75px;line-height:22px;color:#2e2e2e;transform:scale(0.8650,1.000);">2023.10.03 18:37:13</span>
<span class="t" style="left:400.50px;top:513.00px;font-size:16.75px;line-height:22px;color:#2e2e2e;transform:scale(0.8985,1.000);">sell</span>
<span class="t" style="left:485.27px;top:513.00px;font-size:16.75px;line-height:22px;color:#2e2e2e;transform:scale(0.8450,1.000);">0.08</span>
<span class="t" style="left:571.00px;top:513.00px;font-size:16.75px;line-height:22px;color:#2e2e2e;transform:scale(0.9208,1.000);">xauusd..</span>
<span class="t" style="left:706.70px;top:513.00px;font-size:16.75px;line-height:22px;color:#2e2e2e;transform:scale(0.8450,1.000);">1822.93</span>
<span class="t" style="left:860.07px;top:513.00px;font-size:16.75px;line-height:22px;color:#2e2e2e;transform:scale(0.8450,1.000);">0.00</span>
<span class="t" style="left:989.27px;top:513.00px;font-size:16.75px;line-height:22px;color:#2e2e2e;transform:scale(0.8450,1.000);">0.00</span>
<span class="t" style="left:1094.40px;top:513.00px;font-size:16.75px;line-height:22px;color:#2e2e2e;transform:scale(0.8450,1.000);">1813.03</span>
<span class="t" style="left:1247.67px;top:513.00px;font-size:16.75px;line-height:22px;color:#2e2e2e;transform:scale(0.8450,1.000);">0.00</span>
<span class="t" style="left:1376.87px;top:513.00px;font-size:16.75px;line-height:22px;color:#2e2e2e;transform:scale(0.8450,1.000);">5.20</span>
<span class="t" style="left:1540.12px;top:513.00px;font-size:16.75px;line-height:22px;color:#2e2e2e;transform:scale(0.8450,1.000);">79.20</span>
<svg style="left:1588.5px;top:519.5px;" width="10" height="10" viewBox="0 0 10 10"><path d="M1 1 L9 9 M9 1 L1 9" stroke="#9a9a9a" stroke-width="2" fill="none"/></svg>
<span class="t" style="left:174.44px;top:540.00px;font-size:16.75px;line-height:22px;color:#2e2e2e;transform:scale(0.8650,1.000);">2023.10.03 18:37:24</span>
<span class="t" style="left:400.50px;top:540.00px;font-size:16.75px;line-height:22px;color:#2e2e2e;transform:scale(0.8985,1.000);">sell</span>
<span class="t" style="left:485.27px;top:540.00px;font-size:16.75px;line-height:22px;color:#2e2e2e;transform:scale(0.8450,1.000);">0.08</span>
<span class="t" style="left:571.00px;top:540.00px;font-size:16.75px;line-height:22px;color:#2e2e2e;transform:scale(0.9208,1.000);">xauusd..</span>
<span class="t" style="left:706.70px;top:540.00px;font-size:16.75px;line-height:22px;color:#2e2e2e;transform:scale(0.8450,1.000);">1822.53</span>
<span class="t" style="left:860.07px;top:540.00px;font-size:16.75px;line-height:22px;color:#2e2e2e;transform:scale(0.8450,1.000);">0.00</span>
<span class="t" style="left:989.27px;top:540.00px;font-size:16.75px;line-height:22px;color:#2e2e2e;transform:scale(0.8450,1.000);">0.00</span>
<span class="t" style="left:1094.40px;top:540.00px;font-size:16.75px;line-height:22px;color:#2e2e2e;transform:scale(0.8450,1.000);">1813.03</span>
<span class="t" style="left:1247.67px;top:540.00px;font-size:16.75px;line-height:22px;color:#2e2e2e;transform:scale(0.8450,1.000);">0.00</span>
<span class="t" style="left:1376.87px;top:540.00px;font-size:16.75px;line-height:22px;color:#2e2e2e;transform:scale(0.8450,1.000);">5.20</span>
<span class="t" style="left:1540.12px;top:540.00px;font-size:16.75px;line-height:22px;color:#2e2e2e;transform:scale(0.8450,1.000);">76.00</span>
<svg style="left:1588.5px;top:546.5px;" width="10" height="10" viewBox="0 0 10 10"><path d="M1 1 L9 9 M9 1 L1 9" stroke="#9a9a9a" stroke-width="2" fill="none"/></svg>
<span class="t" style="left:174.44px;top:567.00px;font-size:16.75px;line-height:22px;color:#2e2e2e;transform:scale(0.8650,1.000);">2023.10.03 18:37:28</span>
<span class="t" style="left:400.50px;top:567.00px;font-size:16.75px;line-height:22px;color:#2e2e2e;transform:scale(0.8985,1.000);">sell</span>
<span class="t" style="left:485.27px;top:567.00px;font-size:16.75px;line-height:22px;color:#2e2e2e;transform:scale(0.8450,1.000);">0.08</span>
<span class="t" style="left:571.00px;top:567.00px;font-size:16.75px;line-height:22px;color:#2e2e2e;transform:scale(0.9208,1.000);">xauusd..</span>
<span class="t" style="left:706.70px;top:567.00px;font-size:16.75px;line-height:22px;color:#2e2e2e;transform:scale(0.8450,1.000);">1822.16</span>
<span class="t" style="left:860.07px;top:567.00px;font-size:16.75px;line-height:22px;color:#2e2e2e;transform:scale(0.8450,1.000);">0.00</span>
<span class="t" style="left:989.27px;top:567.00px;font-size:16.75px;line-height:22px;color:#2e2e2e;transform:scale(0.8450,1.000);">0.00</span>
<span class="t" style="left:1094.40px;top:567.00px;font-size:16.75px;line-height:22px;color:#2e2e2e;transform:scale(0.8450,1.000);">1813.03</span>
<span class="t" style="left:1247.67px;top:567.00px;font-size:16.75px;line-height:22px;color:#2e2e2e;transform:scale(0.8450,1.000);">0.00</span>
<span class="t" style="left:1376.87px;top:567.00px;font-size:16.75px;line-height:22px;color:#2e2e2e;transform:scale(0.8450,1.000);">5.20</span>
<span class="t" style="left:1540.12px;top:567.00px;font-size:16.75px;line-height:22px;color:#2e2e2e;transform:scale(0.8450,1.000);">73.04</span>
<svg style="left:1588.5px;top:573.5px;" width="10" height="10" viewBox="0 0 10 10"><path d="M1 1 L9 9 M9 1 L1 9" stroke="#9a9a9a" stroke-width="2" fill="none"/></svg>
<span class="t" style="left:174.44px;top:594.00px;font-size:16.75px;line-height:22px;color:#2e2e2e;transform:scale(0.8650,1.000);">2023.10.03 18:37:30</span>
<span class="t" style="left:400.50px;top:594.00px;font-size:16.75px;line-height:22px;color:#2e2e2e;transform:scale(0.8985,1.000);">sell</span>
<span class="t" style="left:485.27px;top:594.00px;font-size:16.75px;line-height:22px;color:#2e2e2e;transform:scale(0.8450,1.000);">0.08</span>
<span class="t" style="left:571.00px;top:594.00px;font-size:16.75px;line-height:22px;color:#2e2e2e;transform:scale(0.9208,1.000);">xauusd..</span>
<span class="t" style="left:706.70px;top:594.00px;font-size:16.75px;line-height:22px;color:#2e2e2e;transform:scale(0.8450,1.000);">1822.09</span>
<span class="t" style="left:860.07px;top:594.00px;font-size:16.75px;line-height:22px;color:#2e2e2e;transform:scale(0.8450,1.000);">0.00</span>
<span class="t" style="left:989.27px;top:594.00px;font-size:16.75px;line-height:22px;color:#2e2e2e;transform:scale(0.8450,1.000);">0.00</span>
<span class="t" style="left:1094.40px;top:594.00px;font-size:16.75px;line-height:22px;color:#2e2e2e;transform:scale(0.8450,1.000);">1813.03</span>
<span class="t" style="left:1247.67px;top:594.00px;font-size:16.75px;line-height:22px;color:#2e2e2e;transform:scale(0.8450,1.000);">0.00</span>
<span class="t" style="left:1376.87px;top:594.00px;font-size:16.75px;line-height:22px;color:#2e2e2e;transform:scale(0.8450,1.000);">5.20</span>
<span class="t" style="left:1540.12px;top:594.00px;font-size:16.75px;line-height:22px;color:#2e2e2e;transform:scale(0.8450,1.000);">72.48</span>
<svg style="left:1588.5px;top:600.5px;" width="10" height="10" viewBox="0 0 10 10"><path d="M1 1 L9 9 M9 1 L1 9" stroke="#9a9a9a" stroke-width="2" fill="none"/></svg>
<span class="t" style="left:174.44px;top:621.00px;font-size:16.75px;line-height:22px;color:#2e2e2e;transform:scale(0.8650,1.000);">2023.10.03 18:37:43</span>
<span class="t" style="left:400.50px;top:621.00px;font-size:16.75px;line-height:22px;color:#2e2e2e;transform:scale(0.8985,1.000);">sell</span>
<span class="t" style="left:485.27px;top:621.00px;font-size:16.75px;line-height:22px;color:#2e2e2e;transform:scale(0.8450,1.000);">0.08</span>
<span class="t" style="left:571.00px;top:621.00px;font-size:16.75px;line-height:22px;color:#2e2e2e;transform:scale(0.9208,1.000);">xauusd..</span>
<span class="t" style="left:706.70px;top:621.00px;font-size:16.75px;line-height:22px;color:#2e2e2e;transform:scale(0.8450,1.000);">1822.17</span>
<span class="t" style="left:860.07px;top:621.00px;font-size:16.75px;line-height:22px;color:#2e2e2e;transform:scale(0.8450,1.000);">0.00</span>
<span class="t" style="left:989.27px;top:621.00px;font-size:16.75px;line-height:22px;color:#2e2e2e;transform:scale(0.8450,1.000);">0.00</span>
<span class="t" style="left:1094.40px;top:621.00px;font-size:16.75px;line-height:22px;color:#2e2e2e;transform:scale(0.8450,1.000);">1813.03</span>
<span class="t" style="left:1247.67px;top:621.00px;font-size:16.75px;line-height:22px;color:#2e2e2e;transform:scale(0.8450,1.000);">0.00</span>
<span class="t" style="left:1376.87px;top:621.00px;font-size:16.75px;line-height:22px;color:#2e2e2e;transform:scale(0.8450,1.000);">5.20</span>
<span class="t" style="left:1540.12px;top:621.00px;font-size:16.75px;line-height:22px;color:#2e2e2e;transform:scale(0.8450,1.000);">73.12</span>
<svg style="left:1588.5px;top:627.5px;" width="10" height="10" viewBox="0 0 10 10"><path d="M1 1 L9 9 M9 1 L1 9" stroke="#9a9a9a" stroke-width="2" fill="none"/></svg>
<span class="t" style="left:174.44px;top:648.00px;font-size:16.75px;line-height:22px;color:#2e2e2e;transform:scale(0.8650,1.000);">2023.10.03 18:37:44</span>
<span class="t" style="left:400.50px;top:648.00px;font-size:16.75px;line-height:22px;color:#2e2e2e;transform:scale(0.8985,1.000);">sell</span>
<span class="t" style="left:485.27px;top:648.00px;font-size:16.75px;line-height:22px;color:#2e2e2e;transform:scale(0.8450,1.000);">0.08</span>
<span class="t" style="left:571.00px;top:648.00px;font-size:16.75px;line-height:22px;color:#2e2e2e;transform:scale(0.9208,1.000);">xauusd..</span>
<span class="t" style="left:706.72px;top:648.00px;font-size:16.75px;line-height:22px;color:#2e2e2e;transform:scale(0.8450,1.000);">1822.11</span>
<span class="t" style="left:860.07px;top:648.00px;font-size:16.75px;line-height:22px;color:#2e2e2e;transform:scale(0.8450,1.000);">0.00</span>
<span class="t" style="left:989.27px;top:648.00px;font-size:16.75px;line-height:22px;color:#2e2e2e;transform:scale(0.8450,1.000);">0.00</span>
<span class="t" style="left:1094.40px;top:648.00px;font-size:16.75px;line-height:22px;color:#2e2e2e;transform:scale(0.8450,1.000);">1813.03</span>
<span class="t" style="left:1247.67px;top:648.00px;font-size:16.75px;line-height:22px;color:#2e2e2e;transform:scale(0.8450,1.000);">0.00</span>
<span class="t" style="left:1376.87px;top:648.00px;font-size:16.75px;line-height:22px;color:#2e2e2e;transform:scale(0.8450,1.000);">5.20</span>
<span class="t" style="left:1540.12px;top:648.00px;font-size:16.75px;line-height:22px;color:#2e2e2e;transform:scale(0.8450,1.000);">72.64</span>
<svg style="left:1588.5px;top:654.5px;" width="10" height="10" viewBox="0 0 10 10"><path d="M1 1 L9 9 M9 1 L1 9" stroke="#9a9a9a" stroke-width="2" fill="none"/></svg>
<span class="t" style="left:174.44px;top:675.00px;font-size:16.75px;line-height:22px;color:#2e2e2e;transform:scale(0.8650,1.000);">2023.10.03 18:37:45</span>
<span class="t" style="left:400.50px;top:675.00px;font-size:16.75px;line-height:22px;color:#2e2e2e;transform:scale(0.8985,1.000);">sell</span>
<span class="t" style="left:485.27px;top:675.00px;font-size:16.75px;line-height:22px;color:#2e2e2e;transform:scale(0.8450,1.000);">0.08</span>
<span class="t" style="left:571.00px;top:675.00px;font-size:16.75px;line-height:22px;color:#2e2e2e;transform:scale(0.9208,1.000);">xauusd..</span>
<span class="t" style="left:706.70px;top:675.00px;font-size:16.75px;line-height:22px;color:#2e2e2e;transform:scale(0.8450,1.000);">1822.10</span>
<span class="t" style="left:860.07px;top:675.00px;font-size:16.75px;line-height:22px;color:#2e2e2e;transform:scale(0.8450,1.000);">0.00</span>
<span class="t" style="left:989.27px;top:675.00px;font-size:16.75px;line-height:22px;color:#2e2e2e;transform:scale(0.8450,1.000);">0.00</span>
<span class="t" style="left:1094.40px;top:675.00px;font-size:16.75px;line-height:22px;color:#2e2e2e;transform:scale(0.8450,1.000);">1813.03</span>
<span class="t" style="left:1247.67px;top:675.00px;font-size:16.75px;line-height:22px;color:#2e2e2e;transform:scale(0.8450,1.000);">0.00</span>
<span class="t" style="left:1376.87px;top:675.00px;font-size:16.75px;line-height:22px;color:#2e2e2e;transform:scale(0.8450,1.000);">5.20</span>
<span class="t" style="left:1540.12px;top:675.00px;font-size:16.75px;line-height:22px;color:#2e2e2e;transform:scale(0.8450,1.000);">72.56</span>
<svg style="left:1588.5px;top:681.5px;" width="10" height="10" viewBox="0 0 10 10"><path d="M1 1 L9 9 M9 1 L1 9" stroke="#9a9a9a" stroke-width="2" fill="none"/></svg>
<span class="t" style="left:174.44px;top:702.00px;font-size:16.75px;line-height:22px;color:#2e2e2e;transform:scale(0.8650,1.000);">2023.10.03 18:37:51</span>
<span class="t" style="left:400.50px;top:702.00px;font-size:16.75px;line-height:22px;color:#2e2e2e;transform:scale(0.8985,1.000);">sell</span>
<span class="t" style="left:485.27px;top:702.00px;font-size:16.75px;line-height:22px;color:#2e2e2e;transform:scale(0.8450,1.000);">0.08</span>
<span class="t" style="left:571.00px;top:702.00px;font-size:16.75px;line-height:22px;color:#2e2e2e;transform:scale(0.9208,1.000);">xauusd..</span>
<span class="t" style="left:706.70px;top:702.00px;font-size:16.75px;line-height:22px;color:#2e2e2e;transform:scale(0.8450,1.000);">1822.34</span>
<span class="t" style="left:860.07px;top:702.00px;font-size:16.75px;line-height:22px;color:#2e2e2e;transform:scale(0.8450,1.000);">0.00</span>
<span class="t" style="left:989.27px;top:702.00px;font-size:16.75px;line-height:22px;color:#2e2e2e;transform:scale(0.8450,1.000);">0.00</span>
<span class="t" style="left:1094.40px;top:702.00px;font-size:16.75px;line-height:22px;color:#2e2e2e;transform:scale(0.8450,1.000);">1813.03</span>
<span class="t" style="left:1247.67px;top:702.00px;font-size:16.75px;line-height:22px;color:#2e2e2e;transform:scale(0.8450,1.000);">0.00</span>
<span class="t" style="left:1376.87px;top:702.00px;font-size:16.75px;line-height:22px;color:#2e2e2e;transform:scale(0.8450,1.000);">5.20</span>
<span class="t" style="left:1540.12px;top:702.00px;font-size:16.75px;line-height:22px;color:#2e2e2e;transform:scale(0.8450,1.000);">74.48</span>
<svg style="left:1588.5px;top:708.5px;" width="10" height="10" viewBox="0 0 10 10"><path d="M1 1 L9 9 M9 1 L1 9" stroke="#9a9a9a" stroke-width="2" fill="none"/></svg>
<span class="t" style="left:174.44px;top:729.00px;font-size:16.75px;line-height:22px;color:#2e2e2e;transform:scale(0.8650,1.000);">2023.10.03 18:37:52</span>
<span class="t" style="left:400.50px;top:729.00px;font-size:16.75px;line-height:22px;color:#2e2e2e;transform:scale(0.8985,1.000);">sell</span>
<span class="t" style="left:485.27px;top:729.00px;font-size:16.75px;line-height:22px;color:#2e2e2e;transform:scale(0.8450,1.000);">0.08</span>
<span class="t" style="left:571.00px;top:729.00px;font-size:16.75px;line-height:22px;color:#2e2e2e;transform:scale(0.9208,1.000);">xauusd..</span>
<span class="t" style="left:706.70px;top:729.00px;font-size:16.75px;line-height:22px;color:#2e2e2e;transform:scale(0.8450,1.000);">1822.35</span>
<span class="t" style="left:860.07px;top:729.00px;font-size:16.75px;line-height:22px;color:#2e2e2e;transform:scale(0.8450,1.000);">0.00</span>
<span class="t" style="left:989.27px;top:729.00px;font-size:16.75px;line-height:22px;color:#2e2e2e;transform:scale(0.8450,1.000);">0.00</span>
<span class="t" style="left:1094.40px;top:729.00px;font-size:16.75px;line-height:22px;color:#2e2e2e;transform:scale(0.8450,1.000);">1813.03</span>
<span class="t" style="left:1247.67px;top:729.00px;font-size:16.75px;line-height:22px;color:#2e2e2e;transform:scale(0.8450,1.000);">0.00</span>
<span class="t" style="left:1376.87px;top:729.00px;font-size:16.75px;line-height:22px;color:#2e2e2e;transform:scale(0.8450,1.000);">5.20</span>
<span class="t" style="left:1540.12px;top:729.00px;font-size:16.75px;line-height:22px;color:#2e2e2e;transform:scale(0.8450,1.000);">74.56</span>
<div style="left:-12px;top:753px;width:1624px;height:27px;background:#c8c8c8;"></div>
<span class="t" style="left:7.50px;top:755.00px;font-size:16.9px;line-height:22px;color:#1e1e1e;font-weight:bold;transform:scale(0.9517,1.000);">484.35 USD</span>
<span class="t" style="left:-60.35px;top:755.00px;font-size:16.9px;line-height:22px;color:#1e1e1e;font-weight:bold;transform:scale(0.9000,1.000);">Balance:</span>
<span class="t" style="left:104.00px;top:755.00px;font-size:16.9px;line-height:22px;color:#1e1e1e;font-weight:bold;transform:scale(0.9197,1.000);">Equity: 1 368.75</span>
<span class="t" style="left:231.00px;top:755.00px;font-size:16.9px;line-height:22px;color:#1e1e1e;font-weight:bold;transform:scale(0.9408,1.000);">Margin: 320.75</span>
<span class="t" style="left:350.00px;top:755.00px;font-size:16.9px;line-height:22px;color:#1e1e1e;font-weight:bold;transform:scale(0.9399,1.000);">Free margin: 1 048.00</span>
<span class="t" style="left:522.50px;top:755.00px;font-size:16.9px;line-height:22px;color:#1e1e1e;font-weight:bold;transform:scale(0.9352,1.000);">Margin level: 426.74%</span>
<span class="t" style="left:1525.00px;top:755.00px;font-size:16.9px;line-height:22px;color:#1e1e1e;font-weight:bold;transform:scale(0.9878,1.000);">884.40</span>
<div style="left:0;top:10.3px;width:1600px;height:815.7px;overflow:hidden;pointer-events:none;"><svg style="left:0;top:-10.3px;" width="1600" height="826" viewBox="0 0 1600 826"><g fill="rgba(181,181,181,0.41)"><path transform="translate(968,233) rotate(-15)" d="M0,-84 C-12,-70 -40,-55 -72,-63 C-73.5,-48 -74.5,-30 -73.5,-15 C-70,12 -56,38 -37,60 C-26,71 -10,79 0,83 C10,79 26,71 37,60 C56,38 70,12 73.5,-15 C74.5,-30 73.5,-48 72,-63 C40,-55 12,-70 0,-84 Z M-13.5,-40.5 H13.5 V-13.5 H40.5 V13.5 H13.5 V40.5 H-13.5 V13.5 H-40.5 V-13.5 H-13.5 Z" fill-rule="evenodd"/><path transform="translate(588,335) rotate(-15)" d="M0,-84 C-12,-70 -40,-55 -72,-63 C-73.5,-48 -74.5,-30 -73.5,-15 C-70,12 -56,38 -37,60 C-26,71 -10,79 0,83 C10,79 26,71 37,60 C56,38 70,12 73.5,-15 C74.5,-30 73.5,-48 72,-63 C40,-55 12,-70 0,-84 Z M-13.5,-40.5 H13.5 V-13.5 H40.5 V13.5 H13.5 V40.5 H-13.5 V13.5 H-40.5 V-13.5 H-13.5 Z" fill-rule="evenodd"/><path transform="translate(208,437) rotate(-15)" d="M0,-84 C-12,-70 -40,-55 -72,-63 C-73.5,-48 -74.5,-30 -73.5,-15 C-70,12 -56,38 -37,60 C-26,71 -10,79 0,83 C10,79 26,71 37,60 C56,38 70,12 73.5,-15 C74.5,-30 73.5,-48 72,-63 C40,-55 12,-70 0,-84 Z M-13.5,-40.5 H13.5 V-13.5 H40.5 V13.5 H13.5 V40.5 H-13.5 V13.5 H-40.5 V-13.5 H-13.5 Z" fill-rule="evenodd"/><path transform="translate(1348,129.8) rotate(-15)" d="M0,-84 C-12,-70 -40,-55 -72,-63 C-73.5,-48 -74.5,-30 -73.5,-15 C-70,12 -56,38 -37,60 C-26,71 -10,79 0,83 C10,79 26,71 37,60 C56,38 70,12 73.5,-15 C74.5,-30 73.5,-48 72,-63 C40,-55 12,-70 0,-84 Z M-13.5,-40.5 H13.5 V-13.5 H40.5 V13.5 H13.5 V40.5 H-13.5 V13.5 H-40.5 V-13.5 H-13.5 Z" fill-rule="evenodd"/><path transform="translate(1236.5,572) rotate(-15)" d="M0,-84 C-12,-70 -40,-55 -72,-63 C-73.5,-48 -74.5,-30 -73.5,-15 C-70,12 -56,38 -37,60 C-26,71 -10,79 0,83 C10,79 26,71 37,60 C56,38 70,12 73.5,-15 C74.5,-30 73.5,-48 72,-63 C40,-55 12,-70 0,-84 Z M-13.5,-40.5 H13.5 V-13.5 H40.5 V13.5 H13.5 V40.5 H-13.5 V13.5 H-40.5 V-13.5 H-13.5 Z" fill-rule="evenodd"/><path transform="translate(856.5,674) rotate(-15)" d="M0,-84 C-12,-70 -40,-55 -72,-63 C-73.5,-48 -74.5,-30 -73.5,-15 C-70,12 -56,38 -37,60 C-26,71 -10,79 0,83 C10,79 26,71 37,60 C56,38 70,12 73.5,-15 C74.5,-30 73.5,-48 72,-63 C40,-55 12,-70 0,-84 Z M-13.5,-40.5 H13.5 V-13.5 H40.5 V13.5 H13.5 V40.5 H-13.5 V13.5 H-40.5 V-13.5 H-13.5 Z" fill-rule="evenodd"/><path transform="translate(476.5,776) rotate(-15)" d="M0,-84 C-12,-70 -40,-55 -72,-63 C-73.5,-48 -74.5,-30 -73.5,-15 C-70,12 -56,38 -37,60 C-26,71 -10,79 0,83 C10,79 26,71 37,60 C56,38 70,12 73.5,-15 C74.5,-30 73.5,-48 72,-63 C40,-55 12,-70 0,-84 Z M-13.5,-40.5 H13.5 V-13.5 H40.5 V13.5 H13.5 V40.5 H-13.5 V13.5 H-40.5 V-13.5 H-13.5 Z" fill-rule="evenodd"/><path transform="translate(95,879) rotate(-15)" d="M0,-84 C-12,-70 -40,-55 -72,-63 C-73.5,-48 -74.5,-30 -73.5,-15 C-70,12 -56,38 -37,60 C-26,71 -10,79 0,83 C10,79 26,71 37,60 C56,38 70,12 73.5,-15 C74.5,-30 73.5,-48 72,-63 C40,-55 12,-70 0,-84 Z M-13.5,-40.5 H13.5 V-13.5 H40.5 V13.5 H13.5 V40.5 H-13.5 V13.5 H-40.5 V-13.5 H-13.5 Z" fill-rule="evenodd"/><path transform="translate(1616.5,470) rotate(-15)" d="M0,-84 C-12,-70 -40,-55 -72,-63 C-73.5,-48 -74.5,-30 -73.5,-15 C-70,12 -56,38 -37,60 C-26,71 -10,79 0,83 C10,79 26,71 37,60 C56,38 70,12 73.5,-15 C74.5,-30 73.5,-48 72,-63 C40,-55 12,-70 0,-84 Z M-13.5,-40.5 H13.5 V-13.5 H40.5 V13.5 H13.5 V40.5 H-13.5 V13.5 H-40.5 V-13.5 H-13.5 Z" fill-rule="evenodd"/><path transform="translate(107,50) rotate(-15)" d="M0,-84 C-12,-70 -40,-55 -72,-63 C-73.5,-48 -74.5,-30 -73.5,-15 C-70,12 -56,38 -37,60 C-26,71 -10,79 0,83 C10,79 26,71 37,60 C56,38 70,12 73.5,-15 C74.5,-30 73.5,-48 72,-63 C40,-55 12,-70 0,-84 Z M-13.5,-40.5 H13.5 V-13.5 H40.5 V13.5 H13.5 V40.5 H-13.5 V13.5 H-40.5 V-13.5 H-13.5 Z" fill-rule="evenodd"/><path transform="translate(487,-57) rotate(-15)" d="M0,-84 C-12,-70 -40,-55 -72,-63 C-73.5,-48 -74.5,-30 -73.5,-15 C-70,12 -56,38 -37,60 C-26,71 -10,79 0,83 C10,79 26,71 37,60 C56,38 70,12 73.5,-15 C74.5,-30 73.5,-48 72,-63 C40,-55 12,-70 0,-84 Z M-13.5,-40.5 H13.5 V-13.5 H40.5 V13.5 H13.5 V40.5 H-13.5 V13.5 H-40.5 V-13.5 H-13.5 Z" fill-rule="evenodd"/><path transform="translate(1561.5,902.7) rotate(-15)" d="M0,-84 C-12,-70 -40,-55 -72,-63 C-73.5,-48 -74.5,-30 -73.5,-15 C-70,12 -56,38 -37,60 C-26,71 -10,79 0,83 C10,79 26,71 37,60 C56,38 70,12 73.5,-15 C74.5,-30 73.5,-48 72,-63 C40,-55 12,-70 0,-84 Z M-13.5,-40.5 H13.5 V-13.5 H40.5 V13.5 H13.5 V40.5 H-13.5 V13.5 H-40.5 V-13.5 H-13.5 Z" fill-rule="evenodd"/></g></svg></div>
</div></div></div></body></html>
